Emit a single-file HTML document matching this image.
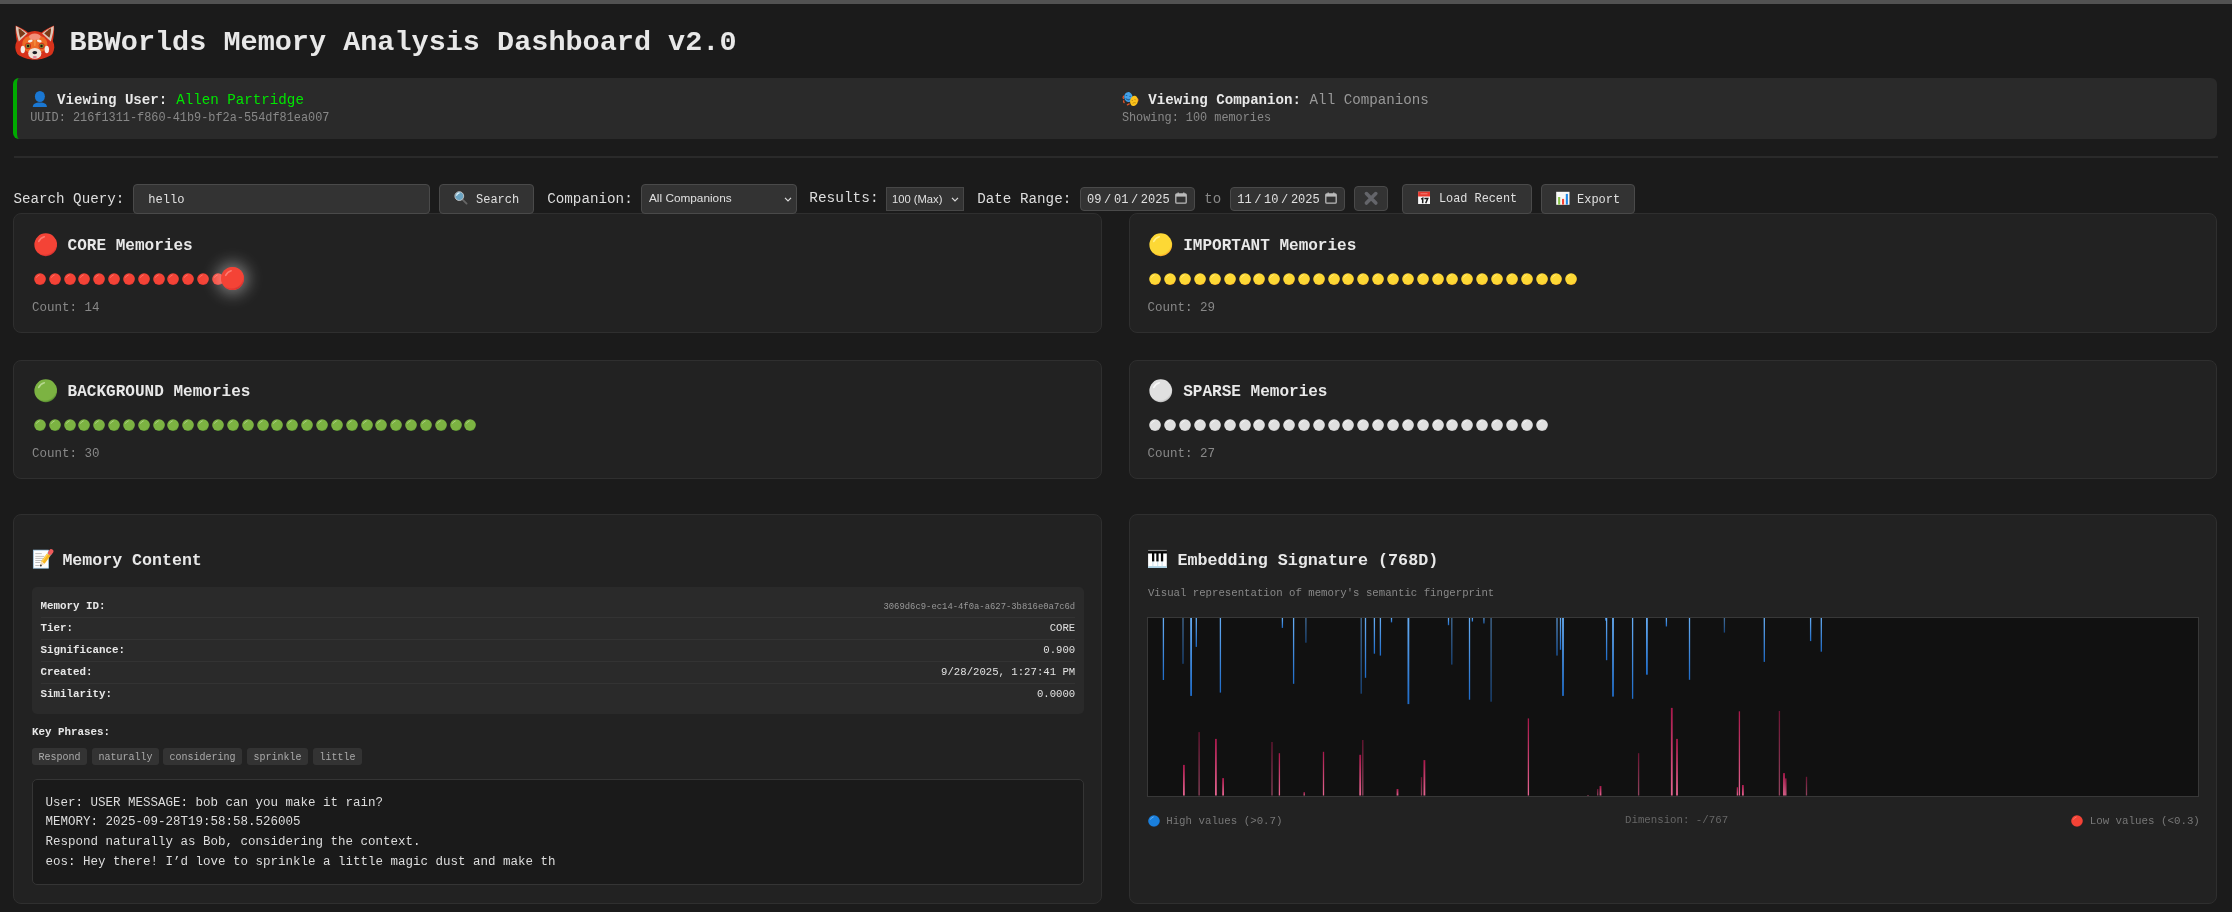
<!DOCTYPE html><html><head><meta charset="utf-8"><title>BBWorlds Memory Analysis Dashboard</title><style>
*{box-sizing:border-box;margin:0;padding:0}
html,body{width:2232px;height:912px;overflow:hidden;background:#1b1b1b;font-family:'Liberation Mono', monospace;color:#e0e0e0;-webkit-font-smoothing:antialiased}
.a{position:absolute}
.t{position:absolute;white-space:pre;line-height:1;font-family:'Liberation Mono', monospace}
.b{font-weight:bold}
.card{position:absolute;background:#222222;border:1px solid #2f2f2f;border-radius:8px}
.inp{position:absolute;background:#333333;border:1px solid #4a4a4a;border-radius:4px}
</style></head><body><div style="position:absolute;left:0;top:0;width:2232px;height:912px;will-change:transform">
<div class="a" style="left:0;top:0;width:2232px;height:4px;background:#525252"></div>
<svg class="a" style="left:12px;top:22px" width="46" height="40" viewBox="12 22 46 40">
<path d="M15.7,25.5 C20,27 25,30 28,32.5 Q34.8,29.5 41.6,32.5 C44.6,30 49.6,27 54,25.5 C54.5,30 53.8,36 52.8,41 C55,45 54.8,50 52.3,54 C47.5,58 40.5,59.6 34.8,59.8 C29,59.6 22,58 17.3,54 C14.8,50 14.6,45 16.8,41 C15.8,36 15.2,30 15.7,25.5 Z" fill="#d7321b"/>
<path d="M15.9,26 C20,28 24.5,30.8 27.5,33.5 L18.8,41.5 C17.3,36 15.6,30 15.9,26 Z" fill="#dcc6b8"/>
<path d="M18.6,28.2 C21,29.5 23.5,31.5 25.3,33.6 L20.2,37.8 C19.1,34.5 18.5,31 18.6,28.2 Z" fill="#7b3b18"/>
<path d="M53.7,26 C49.6,28 45.1,30.8 42.1,33.5 L50.8,41.5 C52.3,36 54,30 53.7,26 Z" fill="#dcc6b8"/>
<path d="M51,28.2 C48.6,29.5 46.1,31.5 44.3,33.6 L49.4,37.8 C50.5,34.5 51.1,31 51,28.2 Z" fill="#7b3b18"/>
<ellipse cx="34.8" cy="44" rx="12.5" ry="9.5" fill="#ec6a26"/>
<ellipse cx="34.8" cy="36.8" rx="5.8" ry="3.2" fill="#f2907a"/>
<path d="M33.6,40 L36,40 L35.5,46 L34.1,46 Z" fill="#f28a3a"/>
<ellipse cx="30.3" cy="41" rx="2.4" ry="1.3" fill="#f6efea" transform="rotate(-15 30.3 41)"/>
<ellipse cx="39.3" cy="41" rx="2.4" ry="1.3" fill="#f6efea" transform="rotate(15 39.3 41)"/>
<circle cx="28" cy="46" r="3" fill="#c8241a"/><circle cx="41.6" cy="46" r="3" fill="#c8241a"/>
<circle cx="28" cy="46" r="2.3" fill="#8d8a2c"/><circle cx="41.6" cy="46" r="2.3" fill="#8d8a2c"/>
<circle cx="28.1" cy="46" r="1.2" fill="#161616"/><circle cx="41.5" cy="46" r="1.2" fill="#161616"/>
<ellipse cx="22.8" cy="49.5" rx="2.2" ry="3.8" fill="#f4ece7"/><ellipse cx="46.8" cy="49.5" rx="2.2" ry="3.8" fill="#f4ece7"/>
<ellipse cx="34.8" cy="53.4" rx="6.6" ry="5.4" fill="#ede1d7"/>
<ellipse cx="34.8" cy="52.6" rx="2.4" ry="1.7" fill="#1c1c24"/>
<ellipse cx="34.8" cy="57" rx="2.1" ry="1.1" fill="#e07b93"/>
</svg>
<div class="t" style="left:69.50px;top:28.67px;font-size:28.5px;color:#e8e8e8;font-weight:bold;">BBWorlds Memory Analysis Dashboard v2.0</div>
<div class="a" style="left:13.3px;top:78px;width:2204px;height:60.5px;background:#2a2a2a;border-left:4px solid #00aa00;border-radius:6px"></div>
<svg class="a" style="left:32px;top:90px" width="16" height="18" viewBox="32 90 16 18">
<ellipse cx="39.9" cy="96.5" rx="5" ry="5.6" fill="#1a77d2"/><path d="M32.8,107.1 C32.8,104 35,102.4 39.9,102.4 C44.8,102.4 46.9,104 46.9,107.1 Z" fill="#1a77d2"/></svg>
<div class="t" style="left:57.00px;top:93.16px;font-size:14.15px;color:#e8e8e8;font-weight:bold;">Viewing User: </div>
<div class="t" style="left:176.20px;top:93.12px;font-size:14.2px;color:#00e600;">Allen Partridge</div>
<div class="t" style="left:30.20px;top:113.20px;font-size:11.88px;color:#888888;">UUID: 216f1311-f860-41b9-bf2a-554df81ea007</div>
<svg class="a" style="left:1120px;top:90px" width="20" height="18" viewBox="1120 90 20 18">
<path d="M1123.6,96.3 q-0.9,1 -0.2,2.2 M1123.8,100.8 q-0.6,1 0.3,1.8 M1127.4,104.8 q1,-0.4 1.8,-0.9 M1137.6,99 q0.7,0.9 0.2,1.9" stroke="#e0542a" stroke-width="1.3" fill="none" stroke-linecap="round"/>
<ellipse cx="1128.4" cy="97.1" rx="4.2" ry="5" fill="#42a0e8" transform="rotate(-8 1128.4 97.1)"/>
<ellipse cx="1126.5" cy="95.6" rx="0.9" ry="0.5" fill="#1f5f95"/><ellipse cx="1130.1" cy="96.2" rx="0.9" ry="0.5" fill="#1f5f95"/>
<path d="M1125.6,98.6 Q1128,101.4 1130.6,99.2 Q1128,100 1125.6,98.6 Z" fill="#1f5f95" stroke="#1f5f95" stroke-width="0.6"/>
<ellipse cx="1134" cy="100.9" rx="3.9" ry="5.2" fill="#fbc21b" transform="rotate(12 1134 100.9)"/>
<path d="M1131.6,100.6 l1.4,-0.3 M1134.4,99.4 l1.3,0.4 M1132.6,103.4 Q1134.2,102 1135.8,102.9" stroke="#b9860e" stroke-width="0.8" fill="none"/>
</svg>
<div class="t" style="left:1148.30px;top:93.16px;font-size:14.15px;color:#e8e8e8;font-weight:bold;">Viewing Companion: </div>
<div class="t" style="left:1309.61px;top:93.12px;font-size:14.2px;color:#999999;">All Companions</div>
<div class="t" style="left:1121.90px;top:113.02px;font-size:11.85px;color:#888888;">Showing: 100 memories</div>
<div class="a" style="left:13.5px;top:156px;width:2204px;height:2px;background:#2a2a2a"></div>
<div class="card" style="left:13.3px;top:213.3px;width:1088.45px;height:119.3px"></div>
<div style="position:absolute;left:33.6px;top:233.10000000000002px;width:23.5px;height:23.5px"><svg width="23.5" height="23.5" viewBox="0 0 32 32" style="display:block"><defs><radialGradient id="gf4433623" cx="45%" cy="40%" r="60%"><stop offset="0" stop-color="#f44336"/><stop offset="0.85" stop-color="#f44336"/><stop offset="1" stop-color="#d32f2f"/></radialGradient></defs><circle cx="16" cy="16" r="15.5" fill="url(#gf4433623)"/><path d="M6.5 11.5 Q9 6.5 14 5.2" stroke="#ff8a80" stroke-width="2.2" fill="none" stroke-linecap="round" opacity="0.8"/></svg></div>
<div class="t" style="left:67.60px;top:237.50px;font-size:16.05px;color:#e8e8e8;font-weight:bold;">CORE Memories</div>
<div style="position:absolute;left:33.8px;top:272.8px;width:12.1px;height:12.1px"><svg width="12.1" height="12.1" viewBox="0 0 32 32" style="display:block"><defs><radialGradient id="gf4433612" cx="45%" cy="40%" r="60%"><stop offset="0" stop-color="#f44336"/><stop offset="0.85" stop-color="#f44336"/><stop offset="1" stop-color="#d32f2f"/></radialGradient></defs><circle cx="16" cy="16" r="15.5" fill="url(#gf4433612)"/><path d="M6.5 11.5 Q9 6.5 14 5.2" stroke="#ff8a80" stroke-width="2.2" fill="none" stroke-linecap="round" opacity="0.8"/></svg></div>
<div style="position:absolute;left:48.65px;top:272.8px;width:12.1px;height:12.1px"><svg width="12.1" height="12.1" viewBox="0 0 32 32" style="display:block"><defs><radialGradient id="gf4433612" cx="45%" cy="40%" r="60%"><stop offset="0" stop-color="#f44336"/><stop offset="0.85" stop-color="#f44336"/><stop offset="1" stop-color="#d32f2f"/></radialGradient></defs><circle cx="16" cy="16" r="15.5" fill="url(#gf4433612)"/><path d="M6.5 11.5 Q9 6.5 14 5.2" stroke="#ff8a80" stroke-width="2.2" fill="none" stroke-linecap="round" opacity="0.8"/></svg></div>
<div style="position:absolute;left:63.5px;top:272.8px;width:12.1px;height:12.1px"><svg width="12.1" height="12.1" viewBox="0 0 32 32" style="display:block"><defs><radialGradient id="gf4433612" cx="45%" cy="40%" r="60%"><stop offset="0" stop-color="#f44336"/><stop offset="0.85" stop-color="#f44336"/><stop offset="1" stop-color="#d32f2f"/></radialGradient></defs><circle cx="16" cy="16" r="15.5" fill="url(#gf4433612)"/><path d="M6.5 11.5 Q9 6.5 14 5.2" stroke="#ff8a80" stroke-width="2.2" fill="none" stroke-linecap="round" opacity="0.8"/></svg></div>
<div style="position:absolute;left:78.35px;top:272.8px;width:12.1px;height:12.1px"><svg width="12.1" height="12.1" viewBox="0 0 32 32" style="display:block"><defs><radialGradient id="gf4433612" cx="45%" cy="40%" r="60%"><stop offset="0" stop-color="#f44336"/><stop offset="0.85" stop-color="#f44336"/><stop offset="1" stop-color="#d32f2f"/></radialGradient></defs><circle cx="16" cy="16" r="15.5" fill="url(#gf4433612)"/><path d="M6.5 11.5 Q9 6.5 14 5.2" stroke="#ff8a80" stroke-width="2.2" fill="none" stroke-linecap="round" opacity="0.8"/></svg></div>
<div style="position:absolute;left:93.19999999999999px;top:272.8px;width:12.1px;height:12.1px"><svg width="12.1" height="12.1" viewBox="0 0 32 32" style="display:block"><defs><radialGradient id="gf4433612" cx="45%" cy="40%" r="60%"><stop offset="0" stop-color="#f44336"/><stop offset="0.85" stop-color="#f44336"/><stop offset="1" stop-color="#d32f2f"/></radialGradient></defs><circle cx="16" cy="16" r="15.5" fill="url(#gf4433612)"/><path d="M6.5 11.5 Q9 6.5 14 5.2" stroke="#ff8a80" stroke-width="2.2" fill="none" stroke-linecap="round" opacity="0.8"/></svg></div>
<div style="position:absolute;left:108.05px;top:272.8px;width:12.1px;height:12.1px"><svg width="12.1" height="12.1" viewBox="0 0 32 32" style="display:block"><defs><radialGradient id="gf4433612" cx="45%" cy="40%" r="60%"><stop offset="0" stop-color="#f44336"/><stop offset="0.85" stop-color="#f44336"/><stop offset="1" stop-color="#d32f2f"/></radialGradient></defs><circle cx="16" cy="16" r="15.5" fill="url(#gf4433612)"/><path d="M6.5 11.5 Q9 6.5 14 5.2" stroke="#ff8a80" stroke-width="2.2" fill="none" stroke-linecap="round" opacity="0.8"/></svg></div>
<div style="position:absolute;left:122.89999999999999px;top:272.8px;width:12.1px;height:12.1px"><svg width="12.1" height="12.1" viewBox="0 0 32 32" style="display:block"><defs><radialGradient id="gf4433612" cx="45%" cy="40%" r="60%"><stop offset="0" stop-color="#f44336"/><stop offset="0.85" stop-color="#f44336"/><stop offset="1" stop-color="#d32f2f"/></radialGradient></defs><circle cx="16" cy="16" r="15.5" fill="url(#gf4433612)"/><path d="M6.5 11.5 Q9 6.5 14 5.2" stroke="#ff8a80" stroke-width="2.2" fill="none" stroke-linecap="round" opacity="0.8"/></svg></div>
<div style="position:absolute;left:137.75px;top:272.8px;width:12.1px;height:12.1px"><svg width="12.1" height="12.1" viewBox="0 0 32 32" style="display:block"><defs><radialGradient id="gf4433612" cx="45%" cy="40%" r="60%"><stop offset="0" stop-color="#f44336"/><stop offset="0.85" stop-color="#f44336"/><stop offset="1" stop-color="#d32f2f"/></radialGradient></defs><circle cx="16" cy="16" r="15.5" fill="url(#gf4433612)"/><path d="M6.5 11.5 Q9 6.5 14 5.2" stroke="#ff8a80" stroke-width="2.2" fill="none" stroke-linecap="round" opacity="0.8"/></svg></div>
<div style="position:absolute;left:152.6px;top:272.8px;width:12.1px;height:12.1px"><svg width="12.1" height="12.1" viewBox="0 0 32 32" style="display:block"><defs><radialGradient id="gf4433612" cx="45%" cy="40%" r="60%"><stop offset="0" stop-color="#f44336"/><stop offset="0.85" stop-color="#f44336"/><stop offset="1" stop-color="#d32f2f"/></radialGradient></defs><circle cx="16" cy="16" r="15.5" fill="url(#gf4433612)"/><path d="M6.5 11.5 Q9 6.5 14 5.2" stroke="#ff8a80" stroke-width="2.2" fill="none" stroke-linecap="round" opacity="0.8"/></svg></div>
<div style="position:absolute;left:167.45px;top:272.8px;width:12.1px;height:12.1px"><svg width="12.1" height="12.1" viewBox="0 0 32 32" style="display:block"><defs><radialGradient id="gf4433612" cx="45%" cy="40%" r="60%"><stop offset="0" stop-color="#f44336"/><stop offset="0.85" stop-color="#f44336"/><stop offset="1" stop-color="#d32f2f"/></radialGradient></defs><circle cx="16" cy="16" r="15.5" fill="url(#gf4433612)"/><path d="M6.5 11.5 Q9 6.5 14 5.2" stroke="#ff8a80" stroke-width="2.2" fill="none" stroke-linecap="round" opacity="0.8"/></svg></div>
<div style="position:absolute;left:182.3px;top:272.8px;width:12.1px;height:12.1px"><svg width="12.1" height="12.1" viewBox="0 0 32 32" style="display:block"><defs><radialGradient id="gf4433612" cx="45%" cy="40%" r="60%"><stop offset="0" stop-color="#f44336"/><stop offset="0.85" stop-color="#f44336"/><stop offset="1" stop-color="#d32f2f"/></radialGradient></defs><circle cx="16" cy="16" r="15.5" fill="url(#gf4433612)"/><path d="M6.5 11.5 Q9 6.5 14 5.2" stroke="#ff8a80" stroke-width="2.2" fill="none" stroke-linecap="round" opacity="0.8"/></svg></div>
<div style="position:absolute;left:197.14999999999998px;top:272.8px;width:12.1px;height:12.1px"><svg width="12.1" height="12.1" viewBox="0 0 32 32" style="display:block"><defs><radialGradient id="gf4433612" cx="45%" cy="40%" r="60%"><stop offset="0" stop-color="#f44336"/><stop offset="0.85" stop-color="#f44336"/><stop offset="1" stop-color="#d32f2f"/></radialGradient></defs><circle cx="16" cy="16" r="15.5" fill="url(#gf4433612)"/><path d="M6.5 11.5 Q9 6.5 14 5.2" stroke="#ff8a80" stroke-width="2.2" fill="none" stroke-linecap="round" opacity="0.8"/></svg></div>
<div style="position:absolute;left:212.0px;top:272.8px;width:12.1px;height:12.1px"><svg width="12.1" height="12.1" viewBox="0 0 32 32" style="display:block"><defs><radialGradient id="gf4433612" cx="45%" cy="40%" r="60%"><stop offset="0" stop-color="#f44336"/><stop offset="0.85" stop-color="#f44336"/><stop offset="1" stop-color="#d32f2f"/></radialGradient></defs><circle cx="16" cy="16" r="15.5" fill="url(#gf4433612)"/><path d="M6.5 11.5 Q9 6.5 14 5.2" stroke="#ff8a80" stroke-width="2.2" fill="none" stroke-linecap="round" opacity="0.8"/></svg></div>
<div class="a" style="left:221.29999999999998px;top:267.25px;width:23.2px;height:23.2px;border-radius:50%;background:#f44336;box-shadow:0 0 16px 4px rgba(255,255,255,0.42)"></div>
<div style="position:absolute;left:221.29999999999998px;top:267.25px;width:23.2px;height:23.2px"><svg width="23.2" height="23.2" viewBox="0 0 32 32" style="display:block"><defs><radialGradient id="gf4433623" cx="45%" cy="40%" r="60%"><stop offset="0" stop-color="#f44336"/><stop offset="0.85" stop-color="#f44336"/><stop offset="1" stop-color="#d32f2f"/></radialGradient></defs><circle cx="16" cy="16" r="15.5" fill="url(#gf4433623)"/><path d="M6.5 11.5 Q9 6.5 14 5.2" stroke="#ff8a80" stroke-width="2.2" fill="none" stroke-linecap="round" opacity="0.8"/></svg></div>
<div class="t" style="left:31.90px;top:301.52px;font-size:12.5px;color:#888888;">Count: 14</div>
<div class="card" style="left:1128.9px;top:213.3px;width:1088.1px;height:119.3px"></div>
<div style="position:absolute;left:1149.2px;top:233.10000000000002px;width:23.5px;height:23.5px"><svg width="23.5" height="23.5" viewBox="0 0 32 32" style="display:block"><defs><radialGradient id="gfdd83523" cx="45%" cy="40%" r="60%"><stop offset="0" stop-color="#fdd835"/><stop offset="0.85" stop-color="#fdd835"/><stop offset="1" stop-color="#f9a825"/></radialGradient></defs><circle cx="16" cy="16" r="15.5" fill="url(#gfdd83523)"/><path d="M6.5 11.5 Q9 6.5 14 5.2" stroke="#fff59d" stroke-width="2.2" fill="none" stroke-linecap="round" opacity="0.8"/></svg></div>
<div class="t" style="left:1183.20px;top:237.50px;font-size:16.05px;color:#e8e8e8;font-weight:bold;">IMPORTANT Memories</div>
<div style="position:absolute;left:1149.4px;top:272.8px;width:12.1px;height:12.1px"><svg width="12.1" height="12.1" viewBox="0 0 32 32" style="display:block"><defs><radialGradient id="gfdd83512" cx="45%" cy="40%" r="60%"><stop offset="0" stop-color="#fdd835"/><stop offset="0.85" stop-color="#fdd835"/><stop offset="1" stop-color="#f9a825"/></radialGradient></defs><circle cx="16" cy="16" r="15.5" fill="url(#gfdd83512)"/><path d="M6.5 11.5 Q9 6.5 14 5.2" stroke="#fff59d" stroke-width="2.2" fill="none" stroke-linecap="round" opacity="0.8"/></svg></div>
<div style="position:absolute;left:1164.25px;top:272.8px;width:12.1px;height:12.1px"><svg width="12.1" height="12.1" viewBox="0 0 32 32" style="display:block"><defs><radialGradient id="gfdd83512" cx="45%" cy="40%" r="60%"><stop offset="0" stop-color="#fdd835"/><stop offset="0.85" stop-color="#fdd835"/><stop offset="1" stop-color="#f9a825"/></radialGradient></defs><circle cx="16" cy="16" r="15.5" fill="url(#gfdd83512)"/><path d="M6.5 11.5 Q9 6.5 14 5.2" stroke="#fff59d" stroke-width="2.2" fill="none" stroke-linecap="round" opacity="0.8"/></svg></div>
<div style="position:absolute;left:1179.1000000000001px;top:272.8px;width:12.1px;height:12.1px"><svg width="12.1" height="12.1" viewBox="0 0 32 32" style="display:block"><defs><radialGradient id="gfdd83512" cx="45%" cy="40%" r="60%"><stop offset="0" stop-color="#fdd835"/><stop offset="0.85" stop-color="#fdd835"/><stop offset="1" stop-color="#f9a825"/></radialGradient></defs><circle cx="16" cy="16" r="15.5" fill="url(#gfdd83512)"/><path d="M6.5 11.5 Q9 6.5 14 5.2" stroke="#fff59d" stroke-width="2.2" fill="none" stroke-linecap="round" opacity="0.8"/></svg></div>
<div style="position:absolute;left:1193.95px;top:272.8px;width:12.1px;height:12.1px"><svg width="12.1" height="12.1" viewBox="0 0 32 32" style="display:block"><defs><radialGradient id="gfdd83512" cx="45%" cy="40%" r="60%"><stop offset="0" stop-color="#fdd835"/><stop offset="0.85" stop-color="#fdd835"/><stop offset="1" stop-color="#f9a825"/></radialGradient></defs><circle cx="16" cy="16" r="15.5" fill="url(#gfdd83512)"/><path d="M6.5 11.5 Q9 6.5 14 5.2" stroke="#fff59d" stroke-width="2.2" fill="none" stroke-linecap="round" opacity="0.8"/></svg></div>
<div style="position:absolute;left:1208.8000000000002px;top:272.8px;width:12.1px;height:12.1px"><svg width="12.1" height="12.1" viewBox="0 0 32 32" style="display:block"><defs><radialGradient id="gfdd83512" cx="45%" cy="40%" r="60%"><stop offset="0" stop-color="#fdd835"/><stop offset="0.85" stop-color="#fdd835"/><stop offset="1" stop-color="#f9a825"/></radialGradient></defs><circle cx="16" cy="16" r="15.5" fill="url(#gfdd83512)"/><path d="M6.5 11.5 Q9 6.5 14 5.2" stroke="#fff59d" stroke-width="2.2" fill="none" stroke-linecap="round" opacity="0.8"/></svg></div>
<div style="position:absolute;left:1223.65px;top:272.8px;width:12.1px;height:12.1px"><svg width="12.1" height="12.1" viewBox="0 0 32 32" style="display:block"><defs><radialGradient id="gfdd83512" cx="45%" cy="40%" r="60%"><stop offset="0" stop-color="#fdd835"/><stop offset="0.85" stop-color="#fdd835"/><stop offset="1" stop-color="#f9a825"/></radialGradient></defs><circle cx="16" cy="16" r="15.5" fill="url(#gfdd83512)"/><path d="M6.5 11.5 Q9 6.5 14 5.2" stroke="#fff59d" stroke-width="2.2" fill="none" stroke-linecap="round" opacity="0.8"/></svg></div>
<div style="position:absolute;left:1238.5px;top:272.8px;width:12.1px;height:12.1px"><svg width="12.1" height="12.1" viewBox="0 0 32 32" style="display:block"><defs><radialGradient id="gfdd83512" cx="45%" cy="40%" r="60%"><stop offset="0" stop-color="#fdd835"/><stop offset="0.85" stop-color="#fdd835"/><stop offset="1" stop-color="#f9a825"/></radialGradient></defs><circle cx="16" cy="16" r="15.5" fill="url(#gfdd83512)"/><path d="M6.5 11.5 Q9 6.5 14 5.2" stroke="#fff59d" stroke-width="2.2" fill="none" stroke-linecap="round" opacity="0.8"/></svg></div>
<div style="position:absolute;left:1253.3500000000001px;top:272.8px;width:12.1px;height:12.1px"><svg width="12.1" height="12.1" viewBox="0 0 32 32" style="display:block"><defs><radialGradient id="gfdd83512" cx="45%" cy="40%" r="60%"><stop offset="0" stop-color="#fdd835"/><stop offset="0.85" stop-color="#fdd835"/><stop offset="1" stop-color="#f9a825"/></radialGradient></defs><circle cx="16" cy="16" r="15.5" fill="url(#gfdd83512)"/><path d="M6.5 11.5 Q9 6.5 14 5.2" stroke="#fff59d" stroke-width="2.2" fill="none" stroke-linecap="round" opacity="0.8"/></svg></div>
<div style="position:absolute;left:1268.2px;top:272.8px;width:12.1px;height:12.1px"><svg width="12.1" height="12.1" viewBox="0 0 32 32" style="display:block"><defs><radialGradient id="gfdd83512" cx="45%" cy="40%" r="60%"><stop offset="0" stop-color="#fdd835"/><stop offset="0.85" stop-color="#fdd835"/><stop offset="1" stop-color="#f9a825"/></radialGradient></defs><circle cx="16" cy="16" r="15.5" fill="url(#gfdd83512)"/><path d="M6.5 11.5 Q9 6.5 14 5.2" stroke="#fff59d" stroke-width="2.2" fill="none" stroke-linecap="round" opacity="0.8"/></svg></div>
<div style="position:absolute;left:1283.0500000000002px;top:272.8px;width:12.1px;height:12.1px"><svg width="12.1" height="12.1" viewBox="0 0 32 32" style="display:block"><defs><radialGradient id="gfdd83512" cx="45%" cy="40%" r="60%"><stop offset="0" stop-color="#fdd835"/><stop offset="0.85" stop-color="#fdd835"/><stop offset="1" stop-color="#f9a825"/></radialGradient></defs><circle cx="16" cy="16" r="15.5" fill="url(#gfdd83512)"/><path d="M6.5 11.5 Q9 6.5 14 5.2" stroke="#fff59d" stroke-width="2.2" fill="none" stroke-linecap="round" opacity="0.8"/></svg></div>
<div style="position:absolute;left:1297.9px;top:272.8px;width:12.1px;height:12.1px"><svg width="12.1" height="12.1" viewBox="0 0 32 32" style="display:block"><defs><radialGradient id="gfdd83512" cx="45%" cy="40%" r="60%"><stop offset="0" stop-color="#fdd835"/><stop offset="0.85" stop-color="#fdd835"/><stop offset="1" stop-color="#f9a825"/></radialGradient></defs><circle cx="16" cy="16" r="15.5" fill="url(#gfdd83512)"/><path d="M6.5 11.5 Q9 6.5 14 5.2" stroke="#fff59d" stroke-width="2.2" fill="none" stroke-linecap="round" opacity="0.8"/></svg></div>
<div style="position:absolute;left:1312.75px;top:272.8px;width:12.1px;height:12.1px"><svg width="12.1" height="12.1" viewBox="0 0 32 32" style="display:block"><defs><radialGradient id="gfdd83512" cx="45%" cy="40%" r="60%"><stop offset="0" stop-color="#fdd835"/><stop offset="0.85" stop-color="#fdd835"/><stop offset="1" stop-color="#f9a825"/></radialGradient></defs><circle cx="16" cy="16" r="15.5" fill="url(#gfdd83512)"/><path d="M6.5 11.5 Q9 6.5 14 5.2" stroke="#fff59d" stroke-width="2.2" fill="none" stroke-linecap="round" opacity="0.8"/></svg></div>
<div style="position:absolute;left:1327.6000000000001px;top:272.8px;width:12.1px;height:12.1px"><svg width="12.1" height="12.1" viewBox="0 0 32 32" style="display:block"><defs><radialGradient id="gfdd83512" cx="45%" cy="40%" r="60%"><stop offset="0" stop-color="#fdd835"/><stop offset="0.85" stop-color="#fdd835"/><stop offset="1" stop-color="#f9a825"/></radialGradient></defs><circle cx="16" cy="16" r="15.5" fill="url(#gfdd83512)"/><path d="M6.5 11.5 Q9 6.5 14 5.2" stroke="#fff59d" stroke-width="2.2" fill="none" stroke-linecap="round" opacity="0.8"/></svg></div>
<div style="position:absolute;left:1342.45px;top:272.8px;width:12.1px;height:12.1px"><svg width="12.1" height="12.1" viewBox="0 0 32 32" style="display:block"><defs><radialGradient id="gfdd83512" cx="45%" cy="40%" r="60%"><stop offset="0" stop-color="#fdd835"/><stop offset="0.85" stop-color="#fdd835"/><stop offset="1" stop-color="#f9a825"/></radialGradient></defs><circle cx="16" cy="16" r="15.5" fill="url(#gfdd83512)"/><path d="M6.5 11.5 Q9 6.5 14 5.2" stroke="#fff59d" stroke-width="2.2" fill="none" stroke-linecap="round" opacity="0.8"/></svg></div>
<div style="position:absolute;left:1357.3000000000002px;top:272.8px;width:12.1px;height:12.1px"><svg width="12.1" height="12.1" viewBox="0 0 32 32" style="display:block"><defs><radialGradient id="gfdd83512" cx="45%" cy="40%" r="60%"><stop offset="0" stop-color="#fdd835"/><stop offset="0.85" stop-color="#fdd835"/><stop offset="1" stop-color="#f9a825"/></radialGradient></defs><circle cx="16" cy="16" r="15.5" fill="url(#gfdd83512)"/><path d="M6.5 11.5 Q9 6.5 14 5.2" stroke="#fff59d" stroke-width="2.2" fill="none" stroke-linecap="round" opacity="0.8"/></svg></div>
<div style="position:absolute;left:1372.15px;top:272.8px;width:12.1px;height:12.1px"><svg width="12.1" height="12.1" viewBox="0 0 32 32" style="display:block"><defs><radialGradient id="gfdd83512" cx="45%" cy="40%" r="60%"><stop offset="0" stop-color="#fdd835"/><stop offset="0.85" stop-color="#fdd835"/><stop offset="1" stop-color="#f9a825"/></radialGradient></defs><circle cx="16" cy="16" r="15.5" fill="url(#gfdd83512)"/><path d="M6.5 11.5 Q9 6.5 14 5.2" stroke="#fff59d" stroke-width="2.2" fill="none" stroke-linecap="round" opacity="0.8"/></svg></div>
<div style="position:absolute;left:1387.0px;top:272.8px;width:12.1px;height:12.1px"><svg width="12.1" height="12.1" viewBox="0 0 32 32" style="display:block"><defs><radialGradient id="gfdd83512" cx="45%" cy="40%" r="60%"><stop offset="0" stop-color="#fdd835"/><stop offset="0.85" stop-color="#fdd835"/><stop offset="1" stop-color="#f9a825"/></radialGradient></defs><circle cx="16" cy="16" r="15.5" fill="url(#gfdd83512)"/><path d="M6.5 11.5 Q9 6.5 14 5.2" stroke="#fff59d" stroke-width="2.2" fill="none" stroke-linecap="round" opacity="0.8"/></svg></div>
<div style="position:absolute;left:1401.8500000000001px;top:272.8px;width:12.1px;height:12.1px"><svg width="12.1" height="12.1" viewBox="0 0 32 32" style="display:block"><defs><radialGradient id="gfdd83512" cx="45%" cy="40%" r="60%"><stop offset="0" stop-color="#fdd835"/><stop offset="0.85" stop-color="#fdd835"/><stop offset="1" stop-color="#f9a825"/></radialGradient></defs><circle cx="16" cy="16" r="15.5" fill="url(#gfdd83512)"/><path d="M6.5 11.5 Q9 6.5 14 5.2" stroke="#fff59d" stroke-width="2.2" fill="none" stroke-linecap="round" opacity="0.8"/></svg></div>
<div style="position:absolute;left:1416.7px;top:272.8px;width:12.1px;height:12.1px"><svg width="12.1" height="12.1" viewBox="0 0 32 32" style="display:block"><defs><radialGradient id="gfdd83512" cx="45%" cy="40%" r="60%"><stop offset="0" stop-color="#fdd835"/><stop offset="0.85" stop-color="#fdd835"/><stop offset="1" stop-color="#f9a825"/></radialGradient></defs><circle cx="16" cy="16" r="15.5" fill="url(#gfdd83512)"/><path d="M6.5 11.5 Q9 6.5 14 5.2" stroke="#fff59d" stroke-width="2.2" fill="none" stroke-linecap="round" opacity="0.8"/></svg></div>
<div style="position:absolute;left:1431.5500000000002px;top:272.8px;width:12.1px;height:12.1px"><svg width="12.1" height="12.1" viewBox="0 0 32 32" style="display:block"><defs><radialGradient id="gfdd83512" cx="45%" cy="40%" r="60%"><stop offset="0" stop-color="#fdd835"/><stop offset="0.85" stop-color="#fdd835"/><stop offset="1" stop-color="#f9a825"/></radialGradient></defs><circle cx="16" cy="16" r="15.5" fill="url(#gfdd83512)"/><path d="M6.5 11.5 Q9 6.5 14 5.2" stroke="#fff59d" stroke-width="2.2" fill="none" stroke-linecap="round" opacity="0.8"/></svg></div>
<div style="position:absolute;left:1446.4px;top:272.8px;width:12.1px;height:12.1px"><svg width="12.1" height="12.1" viewBox="0 0 32 32" style="display:block"><defs><radialGradient id="gfdd83512" cx="45%" cy="40%" r="60%"><stop offset="0" stop-color="#fdd835"/><stop offset="0.85" stop-color="#fdd835"/><stop offset="1" stop-color="#f9a825"/></radialGradient></defs><circle cx="16" cy="16" r="15.5" fill="url(#gfdd83512)"/><path d="M6.5 11.5 Q9 6.5 14 5.2" stroke="#fff59d" stroke-width="2.2" fill="none" stroke-linecap="round" opacity="0.8"/></svg></div>
<div style="position:absolute;left:1461.25px;top:272.8px;width:12.1px;height:12.1px"><svg width="12.1" height="12.1" viewBox="0 0 32 32" style="display:block"><defs><radialGradient id="gfdd83512" cx="45%" cy="40%" r="60%"><stop offset="0" stop-color="#fdd835"/><stop offset="0.85" stop-color="#fdd835"/><stop offset="1" stop-color="#f9a825"/></radialGradient></defs><circle cx="16" cy="16" r="15.5" fill="url(#gfdd83512)"/><path d="M6.5 11.5 Q9 6.5 14 5.2" stroke="#fff59d" stroke-width="2.2" fill="none" stroke-linecap="round" opacity="0.8"/></svg></div>
<div style="position:absolute;left:1476.1000000000001px;top:272.8px;width:12.1px;height:12.1px"><svg width="12.1" height="12.1" viewBox="0 0 32 32" style="display:block"><defs><radialGradient id="gfdd83512" cx="45%" cy="40%" r="60%"><stop offset="0" stop-color="#fdd835"/><stop offset="0.85" stop-color="#fdd835"/><stop offset="1" stop-color="#f9a825"/></radialGradient></defs><circle cx="16" cy="16" r="15.5" fill="url(#gfdd83512)"/><path d="M6.5 11.5 Q9 6.5 14 5.2" stroke="#fff59d" stroke-width="2.2" fill="none" stroke-linecap="round" opacity="0.8"/></svg></div>
<div style="position:absolute;left:1490.95px;top:272.8px;width:12.1px;height:12.1px"><svg width="12.1" height="12.1" viewBox="0 0 32 32" style="display:block"><defs><radialGradient id="gfdd83512" cx="45%" cy="40%" r="60%"><stop offset="0" stop-color="#fdd835"/><stop offset="0.85" stop-color="#fdd835"/><stop offset="1" stop-color="#f9a825"/></radialGradient></defs><circle cx="16" cy="16" r="15.5" fill="url(#gfdd83512)"/><path d="M6.5 11.5 Q9 6.5 14 5.2" stroke="#fff59d" stroke-width="2.2" fill="none" stroke-linecap="round" opacity="0.8"/></svg></div>
<div style="position:absolute;left:1505.8000000000002px;top:272.8px;width:12.1px;height:12.1px"><svg width="12.1" height="12.1" viewBox="0 0 32 32" style="display:block"><defs><radialGradient id="gfdd83512" cx="45%" cy="40%" r="60%"><stop offset="0" stop-color="#fdd835"/><stop offset="0.85" stop-color="#fdd835"/><stop offset="1" stop-color="#f9a825"/></radialGradient></defs><circle cx="16" cy="16" r="15.5" fill="url(#gfdd83512)"/><path d="M6.5 11.5 Q9 6.5 14 5.2" stroke="#fff59d" stroke-width="2.2" fill="none" stroke-linecap="round" opacity="0.8"/></svg></div>
<div style="position:absolute;left:1520.65px;top:272.8px;width:12.1px;height:12.1px"><svg width="12.1" height="12.1" viewBox="0 0 32 32" style="display:block"><defs><radialGradient id="gfdd83512" cx="45%" cy="40%" r="60%"><stop offset="0" stop-color="#fdd835"/><stop offset="0.85" stop-color="#fdd835"/><stop offset="1" stop-color="#f9a825"/></radialGradient></defs><circle cx="16" cy="16" r="15.5" fill="url(#gfdd83512)"/><path d="M6.5 11.5 Q9 6.5 14 5.2" stroke="#fff59d" stroke-width="2.2" fill="none" stroke-linecap="round" opacity="0.8"/></svg></div>
<div style="position:absolute;left:1535.5px;top:272.8px;width:12.1px;height:12.1px"><svg width="12.1" height="12.1" viewBox="0 0 32 32" style="display:block"><defs><radialGradient id="gfdd83512" cx="45%" cy="40%" r="60%"><stop offset="0" stop-color="#fdd835"/><stop offset="0.85" stop-color="#fdd835"/><stop offset="1" stop-color="#f9a825"/></radialGradient></defs><circle cx="16" cy="16" r="15.5" fill="url(#gfdd83512)"/><path d="M6.5 11.5 Q9 6.5 14 5.2" stroke="#fff59d" stroke-width="2.2" fill="none" stroke-linecap="round" opacity="0.8"/></svg></div>
<div style="position:absolute;left:1550.3500000000001px;top:272.8px;width:12.1px;height:12.1px"><svg width="12.1" height="12.1" viewBox="0 0 32 32" style="display:block"><defs><radialGradient id="gfdd83512" cx="45%" cy="40%" r="60%"><stop offset="0" stop-color="#fdd835"/><stop offset="0.85" stop-color="#fdd835"/><stop offset="1" stop-color="#f9a825"/></radialGradient></defs><circle cx="16" cy="16" r="15.5" fill="url(#gfdd83512)"/><path d="M6.5 11.5 Q9 6.5 14 5.2" stroke="#fff59d" stroke-width="2.2" fill="none" stroke-linecap="round" opacity="0.8"/></svg></div>
<div style="position:absolute;left:1565.2px;top:272.8px;width:12.1px;height:12.1px"><svg width="12.1" height="12.1" viewBox="0 0 32 32" style="display:block"><defs><radialGradient id="gfdd83512" cx="45%" cy="40%" r="60%"><stop offset="0" stop-color="#fdd835"/><stop offset="0.85" stop-color="#fdd835"/><stop offset="1" stop-color="#f9a825"/></radialGradient></defs><circle cx="16" cy="16" r="15.5" fill="url(#gfdd83512)"/><path d="M6.5 11.5 Q9 6.5 14 5.2" stroke="#fff59d" stroke-width="2.2" fill="none" stroke-linecap="round" opacity="0.8"/></svg></div>
<div class="t" style="left:1147.50px;top:301.52px;font-size:12.5px;color:#888888;">Count: 29</div>
<div class="card" style="left:13.3px;top:359.5px;width:1088.45px;height:119.3px"></div>
<div style="position:absolute;left:33.6px;top:379.3px;width:23.5px;height:23.5px"><svg width="23.5" height="23.5" viewBox="0 0 32 32" style="display:block"><defs><radialGradient id="g7cb34223" cx="45%" cy="40%" r="60%"><stop offset="0" stop-color="#7cb342"/><stop offset="0.85" stop-color="#7cb342"/><stop offset="1" stop-color="#558b2f"/></radialGradient></defs><circle cx="16" cy="16" r="15.5" fill="url(#g7cb34223)"/><path d="M6.5 11.5 Q9 6.5 14 5.2" stroke="#c5e1a5" stroke-width="2.2" fill="none" stroke-linecap="round" opacity="0.8"/></svg></div>
<div class="t" style="left:67.60px;top:383.70px;font-size:16.05px;color:#e8e8e8;font-weight:bold;">BACKGROUND Memories</div>
<div style="position:absolute;left:33.8px;top:419.0px;width:12.1px;height:12.1px"><svg width="12.1" height="12.1" viewBox="0 0 32 32" style="display:block"><defs><radialGradient id="g7cb34212" cx="45%" cy="40%" r="60%"><stop offset="0" stop-color="#7cb342"/><stop offset="0.85" stop-color="#7cb342"/><stop offset="1" stop-color="#558b2f"/></radialGradient></defs><circle cx="16" cy="16" r="15.5" fill="url(#g7cb34212)"/><path d="M6.5 11.5 Q9 6.5 14 5.2" stroke="#c5e1a5" stroke-width="2.2" fill="none" stroke-linecap="round" opacity="0.8"/></svg></div>
<div style="position:absolute;left:48.65px;top:419.0px;width:12.1px;height:12.1px"><svg width="12.1" height="12.1" viewBox="0 0 32 32" style="display:block"><defs><radialGradient id="g7cb34212" cx="45%" cy="40%" r="60%"><stop offset="0" stop-color="#7cb342"/><stop offset="0.85" stop-color="#7cb342"/><stop offset="1" stop-color="#558b2f"/></radialGradient></defs><circle cx="16" cy="16" r="15.5" fill="url(#g7cb34212)"/><path d="M6.5 11.5 Q9 6.5 14 5.2" stroke="#c5e1a5" stroke-width="2.2" fill="none" stroke-linecap="round" opacity="0.8"/></svg></div>
<div style="position:absolute;left:63.5px;top:419.0px;width:12.1px;height:12.1px"><svg width="12.1" height="12.1" viewBox="0 0 32 32" style="display:block"><defs><radialGradient id="g7cb34212" cx="45%" cy="40%" r="60%"><stop offset="0" stop-color="#7cb342"/><stop offset="0.85" stop-color="#7cb342"/><stop offset="1" stop-color="#558b2f"/></radialGradient></defs><circle cx="16" cy="16" r="15.5" fill="url(#g7cb34212)"/><path d="M6.5 11.5 Q9 6.5 14 5.2" stroke="#c5e1a5" stroke-width="2.2" fill="none" stroke-linecap="round" opacity="0.8"/></svg></div>
<div style="position:absolute;left:78.35px;top:419.0px;width:12.1px;height:12.1px"><svg width="12.1" height="12.1" viewBox="0 0 32 32" style="display:block"><defs><radialGradient id="g7cb34212" cx="45%" cy="40%" r="60%"><stop offset="0" stop-color="#7cb342"/><stop offset="0.85" stop-color="#7cb342"/><stop offset="1" stop-color="#558b2f"/></radialGradient></defs><circle cx="16" cy="16" r="15.5" fill="url(#g7cb34212)"/><path d="M6.5 11.5 Q9 6.5 14 5.2" stroke="#c5e1a5" stroke-width="2.2" fill="none" stroke-linecap="round" opacity="0.8"/></svg></div>
<div style="position:absolute;left:93.19999999999999px;top:419.0px;width:12.1px;height:12.1px"><svg width="12.1" height="12.1" viewBox="0 0 32 32" style="display:block"><defs><radialGradient id="g7cb34212" cx="45%" cy="40%" r="60%"><stop offset="0" stop-color="#7cb342"/><stop offset="0.85" stop-color="#7cb342"/><stop offset="1" stop-color="#558b2f"/></radialGradient></defs><circle cx="16" cy="16" r="15.5" fill="url(#g7cb34212)"/><path d="M6.5 11.5 Q9 6.5 14 5.2" stroke="#c5e1a5" stroke-width="2.2" fill="none" stroke-linecap="round" opacity="0.8"/></svg></div>
<div style="position:absolute;left:108.05px;top:419.0px;width:12.1px;height:12.1px"><svg width="12.1" height="12.1" viewBox="0 0 32 32" style="display:block"><defs><radialGradient id="g7cb34212" cx="45%" cy="40%" r="60%"><stop offset="0" stop-color="#7cb342"/><stop offset="0.85" stop-color="#7cb342"/><stop offset="1" stop-color="#558b2f"/></radialGradient></defs><circle cx="16" cy="16" r="15.5" fill="url(#g7cb34212)"/><path d="M6.5 11.5 Q9 6.5 14 5.2" stroke="#c5e1a5" stroke-width="2.2" fill="none" stroke-linecap="round" opacity="0.8"/></svg></div>
<div style="position:absolute;left:122.89999999999999px;top:419.0px;width:12.1px;height:12.1px"><svg width="12.1" height="12.1" viewBox="0 0 32 32" style="display:block"><defs><radialGradient id="g7cb34212" cx="45%" cy="40%" r="60%"><stop offset="0" stop-color="#7cb342"/><stop offset="0.85" stop-color="#7cb342"/><stop offset="1" stop-color="#558b2f"/></radialGradient></defs><circle cx="16" cy="16" r="15.5" fill="url(#g7cb34212)"/><path d="M6.5 11.5 Q9 6.5 14 5.2" stroke="#c5e1a5" stroke-width="2.2" fill="none" stroke-linecap="round" opacity="0.8"/></svg></div>
<div style="position:absolute;left:137.75px;top:419.0px;width:12.1px;height:12.1px"><svg width="12.1" height="12.1" viewBox="0 0 32 32" style="display:block"><defs><radialGradient id="g7cb34212" cx="45%" cy="40%" r="60%"><stop offset="0" stop-color="#7cb342"/><stop offset="0.85" stop-color="#7cb342"/><stop offset="1" stop-color="#558b2f"/></radialGradient></defs><circle cx="16" cy="16" r="15.5" fill="url(#g7cb34212)"/><path d="M6.5 11.5 Q9 6.5 14 5.2" stroke="#c5e1a5" stroke-width="2.2" fill="none" stroke-linecap="round" opacity="0.8"/></svg></div>
<div style="position:absolute;left:152.6px;top:419.0px;width:12.1px;height:12.1px"><svg width="12.1" height="12.1" viewBox="0 0 32 32" style="display:block"><defs><radialGradient id="g7cb34212" cx="45%" cy="40%" r="60%"><stop offset="0" stop-color="#7cb342"/><stop offset="0.85" stop-color="#7cb342"/><stop offset="1" stop-color="#558b2f"/></radialGradient></defs><circle cx="16" cy="16" r="15.5" fill="url(#g7cb34212)"/><path d="M6.5 11.5 Q9 6.5 14 5.2" stroke="#c5e1a5" stroke-width="2.2" fill="none" stroke-linecap="round" opacity="0.8"/></svg></div>
<div style="position:absolute;left:167.45px;top:419.0px;width:12.1px;height:12.1px"><svg width="12.1" height="12.1" viewBox="0 0 32 32" style="display:block"><defs><radialGradient id="g7cb34212" cx="45%" cy="40%" r="60%"><stop offset="0" stop-color="#7cb342"/><stop offset="0.85" stop-color="#7cb342"/><stop offset="1" stop-color="#558b2f"/></radialGradient></defs><circle cx="16" cy="16" r="15.5" fill="url(#g7cb34212)"/><path d="M6.5 11.5 Q9 6.5 14 5.2" stroke="#c5e1a5" stroke-width="2.2" fill="none" stroke-linecap="round" opacity="0.8"/></svg></div>
<div style="position:absolute;left:182.3px;top:419.0px;width:12.1px;height:12.1px"><svg width="12.1" height="12.1" viewBox="0 0 32 32" style="display:block"><defs><radialGradient id="g7cb34212" cx="45%" cy="40%" r="60%"><stop offset="0" stop-color="#7cb342"/><stop offset="0.85" stop-color="#7cb342"/><stop offset="1" stop-color="#558b2f"/></radialGradient></defs><circle cx="16" cy="16" r="15.5" fill="url(#g7cb34212)"/><path d="M6.5 11.5 Q9 6.5 14 5.2" stroke="#c5e1a5" stroke-width="2.2" fill="none" stroke-linecap="round" opacity="0.8"/></svg></div>
<div style="position:absolute;left:197.14999999999998px;top:419.0px;width:12.1px;height:12.1px"><svg width="12.1" height="12.1" viewBox="0 0 32 32" style="display:block"><defs><radialGradient id="g7cb34212" cx="45%" cy="40%" r="60%"><stop offset="0" stop-color="#7cb342"/><stop offset="0.85" stop-color="#7cb342"/><stop offset="1" stop-color="#558b2f"/></radialGradient></defs><circle cx="16" cy="16" r="15.5" fill="url(#g7cb34212)"/><path d="M6.5 11.5 Q9 6.5 14 5.2" stroke="#c5e1a5" stroke-width="2.2" fill="none" stroke-linecap="round" opacity="0.8"/></svg></div>
<div style="position:absolute;left:212.0px;top:419.0px;width:12.1px;height:12.1px"><svg width="12.1" height="12.1" viewBox="0 0 32 32" style="display:block"><defs><radialGradient id="g7cb34212" cx="45%" cy="40%" r="60%"><stop offset="0" stop-color="#7cb342"/><stop offset="0.85" stop-color="#7cb342"/><stop offset="1" stop-color="#558b2f"/></radialGradient></defs><circle cx="16" cy="16" r="15.5" fill="url(#g7cb34212)"/><path d="M6.5 11.5 Q9 6.5 14 5.2" stroke="#c5e1a5" stroke-width="2.2" fill="none" stroke-linecap="round" opacity="0.8"/></svg></div>
<div style="position:absolute;left:226.84999999999997px;top:419.0px;width:12.1px;height:12.1px"><svg width="12.1" height="12.1" viewBox="0 0 32 32" style="display:block"><defs><radialGradient id="g7cb34212" cx="45%" cy="40%" r="60%"><stop offset="0" stop-color="#7cb342"/><stop offset="0.85" stop-color="#7cb342"/><stop offset="1" stop-color="#558b2f"/></radialGradient></defs><circle cx="16" cy="16" r="15.5" fill="url(#g7cb34212)"/><path d="M6.5 11.5 Q9 6.5 14 5.2" stroke="#c5e1a5" stroke-width="2.2" fill="none" stroke-linecap="round" opacity="0.8"/></svg></div>
<div style="position:absolute;left:241.7px;top:419.0px;width:12.1px;height:12.1px"><svg width="12.1" height="12.1" viewBox="0 0 32 32" style="display:block"><defs><radialGradient id="g7cb34212" cx="45%" cy="40%" r="60%"><stop offset="0" stop-color="#7cb342"/><stop offset="0.85" stop-color="#7cb342"/><stop offset="1" stop-color="#558b2f"/></radialGradient></defs><circle cx="16" cy="16" r="15.5" fill="url(#g7cb34212)"/><path d="M6.5 11.5 Q9 6.5 14 5.2" stroke="#c5e1a5" stroke-width="2.2" fill="none" stroke-linecap="round" opacity="0.8"/></svg></div>
<div style="position:absolute;left:256.55px;top:419.0px;width:12.1px;height:12.1px"><svg width="12.1" height="12.1" viewBox="0 0 32 32" style="display:block"><defs><radialGradient id="g7cb34212" cx="45%" cy="40%" r="60%"><stop offset="0" stop-color="#7cb342"/><stop offset="0.85" stop-color="#7cb342"/><stop offset="1" stop-color="#558b2f"/></radialGradient></defs><circle cx="16" cy="16" r="15.5" fill="url(#g7cb34212)"/><path d="M6.5 11.5 Q9 6.5 14 5.2" stroke="#c5e1a5" stroke-width="2.2" fill="none" stroke-linecap="round" opacity="0.8"/></svg></div>
<div style="position:absolute;left:271.4px;top:419.0px;width:12.1px;height:12.1px"><svg width="12.1" height="12.1" viewBox="0 0 32 32" style="display:block"><defs><radialGradient id="g7cb34212" cx="45%" cy="40%" r="60%"><stop offset="0" stop-color="#7cb342"/><stop offset="0.85" stop-color="#7cb342"/><stop offset="1" stop-color="#558b2f"/></radialGradient></defs><circle cx="16" cy="16" r="15.5" fill="url(#g7cb34212)"/><path d="M6.5 11.5 Q9 6.5 14 5.2" stroke="#c5e1a5" stroke-width="2.2" fill="none" stroke-linecap="round" opacity="0.8"/></svg></div>
<div style="position:absolute;left:286.25px;top:419.0px;width:12.1px;height:12.1px"><svg width="12.1" height="12.1" viewBox="0 0 32 32" style="display:block"><defs><radialGradient id="g7cb34212" cx="45%" cy="40%" r="60%"><stop offset="0" stop-color="#7cb342"/><stop offset="0.85" stop-color="#7cb342"/><stop offset="1" stop-color="#558b2f"/></radialGradient></defs><circle cx="16" cy="16" r="15.5" fill="url(#g7cb34212)"/><path d="M6.5 11.5 Q9 6.5 14 5.2" stroke="#c5e1a5" stroke-width="2.2" fill="none" stroke-linecap="round" opacity="0.8"/></svg></div>
<div style="position:absolute;left:301.1px;top:419.0px;width:12.1px;height:12.1px"><svg width="12.1" height="12.1" viewBox="0 0 32 32" style="display:block"><defs><radialGradient id="g7cb34212" cx="45%" cy="40%" r="60%"><stop offset="0" stop-color="#7cb342"/><stop offset="0.85" stop-color="#7cb342"/><stop offset="1" stop-color="#558b2f"/></radialGradient></defs><circle cx="16" cy="16" r="15.5" fill="url(#g7cb34212)"/><path d="M6.5 11.5 Q9 6.5 14 5.2" stroke="#c5e1a5" stroke-width="2.2" fill="none" stroke-linecap="round" opacity="0.8"/></svg></div>
<div style="position:absolute;left:315.95px;top:419.0px;width:12.1px;height:12.1px"><svg width="12.1" height="12.1" viewBox="0 0 32 32" style="display:block"><defs><radialGradient id="g7cb34212" cx="45%" cy="40%" r="60%"><stop offset="0" stop-color="#7cb342"/><stop offset="0.85" stop-color="#7cb342"/><stop offset="1" stop-color="#558b2f"/></radialGradient></defs><circle cx="16" cy="16" r="15.5" fill="url(#g7cb34212)"/><path d="M6.5 11.5 Q9 6.5 14 5.2" stroke="#c5e1a5" stroke-width="2.2" fill="none" stroke-linecap="round" opacity="0.8"/></svg></div>
<div style="position:absolute;left:330.8px;top:419.0px;width:12.1px;height:12.1px"><svg width="12.1" height="12.1" viewBox="0 0 32 32" style="display:block"><defs><radialGradient id="g7cb34212" cx="45%" cy="40%" r="60%"><stop offset="0" stop-color="#7cb342"/><stop offset="0.85" stop-color="#7cb342"/><stop offset="1" stop-color="#558b2f"/></radialGradient></defs><circle cx="16" cy="16" r="15.5" fill="url(#g7cb34212)"/><path d="M6.5 11.5 Q9 6.5 14 5.2" stroke="#c5e1a5" stroke-width="2.2" fill="none" stroke-linecap="round" opacity="0.8"/></svg></div>
<div style="position:absolute;left:345.65px;top:419.0px;width:12.1px;height:12.1px"><svg width="12.1" height="12.1" viewBox="0 0 32 32" style="display:block"><defs><radialGradient id="g7cb34212" cx="45%" cy="40%" r="60%"><stop offset="0" stop-color="#7cb342"/><stop offset="0.85" stop-color="#7cb342"/><stop offset="1" stop-color="#558b2f"/></radialGradient></defs><circle cx="16" cy="16" r="15.5" fill="url(#g7cb34212)"/><path d="M6.5 11.5 Q9 6.5 14 5.2" stroke="#c5e1a5" stroke-width="2.2" fill="none" stroke-linecap="round" opacity="0.8"/></svg></div>
<div style="position:absolute;left:360.5px;top:419.0px;width:12.1px;height:12.1px"><svg width="12.1" height="12.1" viewBox="0 0 32 32" style="display:block"><defs><radialGradient id="g7cb34212" cx="45%" cy="40%" r="60%"><stop offset="0" stop-color="#7cb342"/><stop offset="0.85" stop-color="#7cb342"/><stop offset="1" stop-color="#558b2f"/></radialGradient></defs><circle cx="16" cy="16" r="15.5" fill="url(#g7cb34212)"/><path d="M6.5 11.5 Q9 6.5 14 5.2" stroke="#c5e1a5" stroke-width="2.2" fill="none" stroke-linecap="round" opacity="0.8"/></svg></div>
<div style="position:absolute;left:375.35px;top:419.0px;width:12.1px;height:12.1px"><svg width="12.1" height="12.1" viewBox="0 0 32 32" style="display:block"><defs><radialGradient id="g7cb34212" cx="45%" cy="40%" r="60%"><stop offset="0" stop-color="#7cb342"/><stop offset="0.85" stop-color="#7cb342"/><stop offset="1" stop-color="#558b2f"/></radialGradient></defs><circle cx="16" cy="16" r="15.5" fill="url(#g7cb34212)"/><path d="M6.5 11.5 Q9 6.5 14 5.2" stroke="#c5e1a5" stroke-width="2.2" fill="none" stroke-linecap="round" opacity="0.8"/></svg></div>
<div style="position:absolute;left:390.2px;top:419.0px;width:12.1px;height:12.1px"><svg width="12.1" height="12.1" viewBox="0 0 32 32" style="display:block"><defs><radialGradient id="g7cb34212" cx="45%" cy="40%" r="60%"><stop offset="0" stop-color="#7cb342"/><stop offset="0.85" stop-color="#7cb342"/><stop offset="1" stop-color="#558b2f"/></radialGradient></defs><circle cx="16" cy="16" r="15.5" fill="url(#g7cb34212)"/><path d="M6.5 11.5 Q9 6.5 14 5.2" stroke="#c5e1a5" stroke-width="2.2" fill="none" stroke-linecap="round" opacity="0.8"/></svg></div>
<div style="position:absolute;left:405.05px;top:419.0px;width:12.1px;height:12.1px"><svg width="12.1" height="12.1" viewBox="0 0 32 32" style="display:block"><defs><radialGradient id="g7cb34212" cx="45%" cy="40%" r="60%"><stop offset="0" stop-color="#7cb342"/><stop offset="0.85" stop-color="#7cb342"/><stop offset="1" stop-color="#558b2f"/></radialGradient></defs><circle cx="16" cy="16" r="15.5" fill="url(#g7cb34212)"/><path d="M6.5 11.5 Q9 6.5 14 5.2" stroke="#c5e1a5" stroke-width="2.2" fill="none" stroke-linecap="round" opacity="0.8"/></svg></div>
<div style="position:absolute;left:419.9px;top:419.0px;width:12.1px;height:12.1px"><svg width="12.1" height="12.1" viewBox="0 0 32 32" style="display:block"><defs><radialGradient id="g7cb34212" cx="45%" cy="40%" r="60%"><stop offset="0" stop-color="#7cb342"/><stop offset="0.85" stop-color="#7cb342"/><stop offset="1" stop-color="#558b2f"/></radialGradient></defs><circle cx="16" cy="16" r="15.5" fill="url(#g7cb34212)"/><path d="M6.5 11.5 Q9 6.5 14 5.2" stroke="#c5e1a5" stroke-width="2.2" fill="none" stroke-linecap="round" opacity="0.8"/></svg></div>
<div style="position:absolute;left:434.75px;top:419.0px;width:12.1px;height:12.1px"><svg width="12.1" height="12.1" viewBox="0 0 32 32" style="display:block"><defs><radialGradient id="g7cb34212" cx="45%" cy="40%" r="60%"><stop offset="0" stop-color="#7cb342"/><stop offset="0.85" stop-color="#7cb342"/><stop offset="1" stop-color="#558b2f"/></radialGradient></defs><circle cx="16" cy="16" r="15.5" fill="url(#g7cb34212)"/><path d="M6.5 11.5 Q9 6.5 14 5.2" stroke="#c5e1a5" stroke-width="2.2" fill="none" stroke-linecap="round" opacity="0.8"/></svg></div>
<div style="position:absolute;left:449.6px;top:419.0px;width:12.1px;height:12.1px"><svg width="12.1" height="12.1" viewBox="0 0 32 32" style="display:block"><defs><radialGradient id="g7cb34212" cx="45%" cy="40%" r="60%"><stop offset="0" stop-color="#7cb342"/><stop offset="0.85" stop-color="#7cb342"/><stop offset="1" stop-color="#558b2f"/></radialGradient></defs><circle cx="16" cy="16" r="15.5" fill="url(#g7cb34212)"/><path d="M6.5 11.5 Q9 6.5 14 5.2" stroke="#c5e1a5" stroke-width="2.2" fill="none" stroke-linecap="round" opacity="0.8"/></svg></div>
<div style="position:absolute;left:464.45px;top:419.0px;width:12.1px;height:12.1px"><svg width="12.1" height="12.1" viewBox="0 0 32 32" style="display:block"><defs><radialGradient id="g7cb34212" cx="45%" cy="40%" r="60%"><stop offset="0" stop-color="#7cb342"/><stop offset="0.85" stop-color="#7cb342"/><stop offset="1" stop-color="#558b2f"/></radialGradient></defs><circle cx="16" cy="16" r="15.5" fill="url(#g7cb34212)"/><path d="M6.5 11.5 Q9 6.5 14 5.2" stroke="#c5e1a5" stroke-width="2.2" fill="none" stroke-linecap="round" opacity="0.8"/></svg></div>
<div class="t" style="left:31.90px;top:447.72px;font-size:12.5px;color:#888888;">Count: 30</div>
<div class="card" style="left:1128.9px;top:359.5px;width:1088.1px;height:119.3px"></div>
<div style="position:absolute;left:1149.2px;top:379.3px;width:23.5px;height:23.5px"><svg width="23.5" height="23.5" viewBox="0 0 32 32" style="display:block"><defs><radialGradient id="ge0e0e023" cx="45%" cy="40%" r="60%"><stop offset="0" stop-color="#e0e0e0"/><stop offset="0.85" stop-color="#e0e0e0"/><stop offset="1" stop-color="#bdbdbd"/></radialGradient></defs><circle cx="16" cy="16" r="15.5" fill="url(#ge0e0e023)"/><path d="M6.5 11.5 Q9 6.5 14 5.2" stroke="#ffffff" stroke-width="2.2" fill="none" stroke-linecap="round" opacity="0.8"/></svg></div>
<div class="t" style="left:1183.20px;top:383.70px;font-size:16.05px;color:#e8e8e8;font-weight:bold;">SPARSE Memories</div>
<div style="position:absolute;left:1149.4px;top:419.0px;width:12.1px;height:12.1px"><svg width="12.1" height="12.1" viewBox="0 0 32 32" style="display:block"><defs><radialGradient id="ge0e0e012" cx="45%" cy="40%" r="60%"><stop offset="0" stop-color="#e0e0e0"/><stop offset="0.85" stop-color="#e0e0e0"/><stop offset="1" stop-color="#bdbdbd"/></radialGradient></defs><circle cx="16" cy="16" r="15.5" fill="url(#ge0e0e012)"/><path d="M6.5 11.5 Q9 6.5 14 5.2" stroke="#ffffff" stroke-width="2.2" fill="none" stroke-linecap="round" opacity="0.8"/></svg></div>
<div style="position:absolute;left:1164.25px;top:419.0px;width:12.1px;height:12.1px"><svg width="12.1" height="12.1" viewBox="0 0 32 32" style="display:block"><defs><radialGradient id="ge0e0e012" cx="45%" cy="40%" r="60%"><stop offset="0" stop-color="#e0e0e0"/><stop offset="0.85" stop-color="#e0e0e0"/><stop offset="1" stop-color="#bdbdbd"/></radialGradient></defs><circle cx="16" cy="16" r="15.5" fill="url(#ge0e0e012)"/><path d="M6.5 11.5 Q9 6.5 14 5.2" stroke="#ffffff" stroke-width="2.2" fill="none" stroke-linecap="round" opacity="0.8"/></svg></div>
<div style="position:absolute;left:1179.1000000000001px;top:419.0px;width:12.1px;height:12.1px"><svg width="12.1" height="12.1" viewBox="0 0 32 32" style="display:block"><defs><radialGradient id="ge0e0e012" cx="45%" cy="40%" r="60%"><stop offset="0" stop-color="#e0e0e0"/><stop offset="0.85" stop-color="#e0e0e0"/><stop offset="1" stop-color="#bdbdbd"/></radialGradient></defs><circle cx="16" cy="16" r="15.5" fill="url(#ge0e0e012)"/><path d="M6.5 11.5 Q9 6.5 14 5.2" stroke="#ffffff" stroke-width="2.2" fill="none" stroke-linecap="round" opacity="0.8"/></svg></div>
<div style="position:absolute;left:1193.95px;top:419.0px;width:12.1px;height:12.1px"><svg width="12.1" height="12.1" viewBox="0 0 32 32" style="display:block"><defs><radialGradient id="ge0e0e012" cx="45%" cy="40%" r="60%"><stop offset="0" stop-color="#e0e0e0"/><stop offset="0.85" stop-color="#e0e0e0"/><stop offset="1" stop-color="#bdbdbd"/></radialGradient></defs><circle cx="16" cy="16" r="15.5" fill="url(#ge0e0e012)"/><path d="M6.5 11.5 Q9 6.5 14 5.2" stroke="#ffffff" stroke-width="2.2" fill="none" stroke-linecap="round" opacity="0.8"/></svg></div>
<div style="position:absolute;left:1208.8000000000002px;top:419.0px;width:12.1px;height:12.1px"><svg width="12.1" height="12.1" viewBox="0 0 32 32" style="display:block"><defs><radialGradient id="ge0e0e012" cx="45%" cy="40%" r="60%"><stop offset="0" stop-color="#e0e0e0"/><stop offset="0.85" stop-color="#e0e0e0"/><stop offset="1" stop-color="#bdbdbd"/></radialGradient></defs><circle cx="16" cy="16" r="15.5" fill="url(#ge0e0e012)"/><path d="M6.5 11.5 Q9 6.5 14 5.2" stroke="#ffffff" stroke-width="2.2" fill="none" stroke-linecap="round" opacity="0.8"/></svg></div>
<div style="position:absolute;left:1223.65px;top:419.0px;width:12.1px;height:12.1px"><svg width="12.1" height="12.1" viewBox="0 0 32 32" style="display:block"><defs><radialGradient id="ge0e0e012" cx="45%" cy="40%" r="60%"><stop offset="0" stop-color="#e0e0e0"/><stop offset="0.85" stop-color="#e0e0e0"/><stop offset="1" stop-color="#bdbdbd"/></radialGradient></defs><circle cx="16" cy="16" r="15.5" fill="url(#ge0e0e012)"/><path d="M6.5 11.5 Q9 6.5 14 5.2" stroke="#ffffff" stroke-width="2.2" fill="none" stroke-linecap="round" opacity="0.8"/></svg></div>
<div style="position:absolute;left:1238.5px;top:419.0px;width:12.1px;height:12.1px"><svg width="12.1" height="12.1" viewBox="0 0 32 32" style="display:block"><defs><radialGradient id="ge0e0e012" cx="45%" cy="40%" r="60%"><stop offset="0" stop-color="#e0e0e0"/><stop offset="0.85" stop-color="#e0e0e0"/><stop offset="1" stop-color="#bdbdbd"/></radialGradient></defs><circle cx="16" cy="16" r="15.5" fill="url(#ge0e0e012)"/><path d="M6.5 11.5 Q9 6.5 14 5.2" stroke="#ffffff" stroke-width="2.2" fill="none" stroke-linecap="round" opacity="0.8"/></svg></div>
<div style="position:absolute;left:1253.3500000000001px;top:419.0px;width:12.1px;height:12.1px"><svg width="12.1" height="12.1" viewBox="0 0 32 32" style="display:block"><defs><radialGradient id="ge0e0e012" cx="45%" cy="40%" r="60%"><stop offset="0" stop-color="#e0e0e0"/><stop offset="0.85" stop-color="#e0e0e0"/><stop offset="1" stop-color="#bdbdbd"/></radialGradient></defs><circle cx="16" cy="16" r="15.5" fill="url(#ge0e0e012)"/><path d="M6.5 11.5 Q9 6.5 14 5.2" stroke="#ffffff" stroke-width="2.2" fill="none" stroke-linecap="round" opacity="0.8"/></svg></div>
<div style="position:absolute;left:1268.2px;top:419.0px;width:12.1px;height:12.1px"><svg width="12.1" height="12.1" viewBox="0 0 32 32" style="display:block"><defs><radialGradient id="ge0e0e012" cx="45%" cy="40%" r="60%"><stop offset="0" stop-color="#e0e0e0"/><stop offset="0.85" stop-color="#e0e0e0"/><stop offset="1" stop-color="#bdbdbd"/></radialGradient></defs><circle cx="16" cy="16" r="15.5" fill="url(#ge0e0e012)"/><path d="M6.5 11.5 Q9 6.5 14 5.2" stroke="#ffffff" stroke-width="2.2" fill="none" stroke-linecap="round" opacity="0.8"/></svg></div>
<div style="position:absolute;left:1283.0500000000002px;top:419.0px;width:12.1px;height:12.1px"><svg width="12.1" height="12.1" viewBox="0 0 32 32" style="display:block"><defs><radialGradient id="ge0e0e012" cx="45%" cy="40%" r="60%"><stop offset="0" stop-color="#e0e0e0"/><stop offset="0.85" stop-color="#e0e0e0"/><stop offset="1" stop-color="#bdbdbd"/></radialGradient></defs><circle cx="16" cy="16" r="15.5" fill="url(#ge0e0e012)"/><path d="M6.5 11.5 Q9 6.5 14 5.2" stroke="#ffffff" stroke-width="2.2" fill="none" stroke-linecap="round" opacity="0.8"/></svg></div>
<div style="position:absolute;left:1297.9px;top:419.0px;width:12.1px;height:12.1px"><svg width="12.1" height="12.1" viewBox="0 0 32 32" style="display:block"><defs><radialGradient id="ge0e0e012" cx="45%" cy="40%" r="60%"><stop offset="0" stop-color="#e0e0e0"/><stop offset="0.85" stop-color="#e0e0e0"/><stop offset="1" stop-color="#bdbdbd"/></radialGradient></defs><circle cx="16" cy="16" r="15.5" fill="url(#ge0e0e012)"/><path d="M6.5 11.5 Q9 6.5 14 5.2" stroke="#ffffff" stroke-width="2.2" fill="none" stroke-linecap="round" opacity="0.8"/></svg></div>
<div style="position:absolute;left:1312.75px;top:419.0px;width:12.1px;height:12.1px"><svg width="12.1" height="12.1" viewBox="0 0 32 32" style="display:block"><defs><radialGradient id="ge0e0e012" cx="45%" cy="40%" r="60%"><stop offset="0" stop-color="#e0e0e0"/><stop offset="0.85" stop-color="#e0e0e0"/><stop offset="1" stop-color="#bdbdbd"/></radialGradient></defs><circle cx="16" cy="16" r="15.5" fill="url(#ge0e0e012)"/><path d="M6.5 11.5 Q9 6.5 14 5.2" stroke="#ffffff" stroke-width="2.2" fill="none" stroke-linecap="round" opacity="0.8"/></svg></div>
<div style="position:absolute;left:1327.6000000000001px;top:419.0px;width:12.1px;height:12.1px"><svg width="12.1" height="12.1" viewBox="0 0 32 32" style="display:block"><defs><radialGradient id="ge0e0e012" cx="45%" cy="40%" r="60%"><stop offset="0" stop-color="#e0e0e0"/><stop offset="0.85" stop-color="#e0e0e0"/><stop offset="1" stop-color="#bdbdbd"/></radialGradient></defs><circle cx="16" cy="16" r="15.5" fill="url(#ge0e0e012)"/><path d="M6.5 11.5 Q9 6.5 14 5.2" stroke="#ffffff" stroke-width="2.2" fill="none" stroke-linecap="round" opacity="0.8"/></svg></div>
<div style="position:absolute;left:1342.45px;top:419.0px;width:12.1px;height:12.1px"><svg width="12.1" height="12.1" viewBox="0 0 32 32" style="display:block"><defs><radialGradient id="ge0e0e012" cx="45%" cy="40%" r="60%"><stop offset="0" stop-color="#e0e0e0"/><stop offset="0.85" stop-color="#e0e0e0"/><stop offset="1" stop-color="#bdbdbd"/></radialGradient></defs><circle cx="16" cy="16" r="15.5" fill="url(#ge0e0e012)"/><path d="M6.5 11.5 Q9 6.5 14 5.2" stroke="#ffffff" stroke-width="2.2" fill="none" stroke-linecap="round" opacity="0.8"/></svg></div>
<div style="position:absolute;left:1357.3000000000002px;top:419.0px;width:12.1px;height:12.1px"><svg width="12.1" height="12.1" viewBox="0 0 32 32" style="display:block"><defs><radialGradient id="ge0e0e012" cx="45%" cy="40%" r="60%"><stop offset="0" stop-color="#e0e0e0"/><stop offset="0.85" stop-color="#e0e0e0"/><stop offset="1" stop-color="#bdbdbd"/></radialGradient></defs><circle cx="16" cy="16" r="15.5" fill="url(#ge0e0e012)"/><path d="M6.5 11.5 Q9 6.5 14 5.2" stroke="#ffffff" stroke-width="2.2" fill="none" stroke-linecap="round" opacity="0.8"/></svg></div>
<div style="position:absolute;left:1372.15px;top:419.0px;width:12.1px;height:12.1px"><svg width="12.1" height="12.1" viewBox="0 0 32 32" style="display:block"><defs><radialGradient id="ge0e0e012" cx="45%" cy="40%" r="60%"><stop offset="0" stop-color="#e0e0e0"/><stop offset="0.85" stop-color="#e0e0e0"/><stop offset="1" stop-color="#bdbdbd"/></radialGradient></defs><circle cx="16" cy="16" r="15.5" fill="url(#ge0e0e012)"/><path d="M6.5 11.5 Q9 6.5 14 5.2" stroke="#ffffff" stroke-width="2.2" fill="none" stroke-linecap="round" opacity="0.8"/></svg></div>
<div style="position:absolute;left:1387.0px;top:419.0px;width:12.1px;height:12.1px"><svg width="12.1" height="12.1" viewBox="0 0 32 32" style="display:block"><defs><radialGradient id="ge0e0e012" cx="45%" cy="40%" r="60%"><stop offset="0" stop-color="#e0e0e0"/><stop offset="0.85" stop-color="#e0e0e0"/><stop offset="1" stop-color="#bdbdbd"/></radialGradient></defs><circle cx="16" cy="16" r="15.5" fill="url(#ge0e0e012)"/><path d="M6.5 11.5 Q9 6.5 14 5.2" stroke="#ffffff" stroke-width="2.2" fill="none" stroke-linecap="round" opacity="0.8"/></svg></div>
<div style="position:absolute;left:1401.8500000000001px;top:419.0px;width:12.1px;height:12.1px"><svg width="12.1" height="12.1" viewBox="0 0 32 32" style="display:block"><defs><radialGradient id="ge0e0e012" cx="45%" cy="40%" r="60%"><stop offset="0" stop-color="#e0e0e0"/><stop offset="0.85" stop-color="#e0e0e0"/><stop offset="1" stop-color="#bdbdbd"/></radialGradient></defs><circle cx="16" cy="16" r="15.5" fill="url(#ge0e0e012)"/><path d="M6.5 11.5 Q9 6.5 14 5.2" stroke="#ffffff" stroke-width="2.2" fill="none" stroke-linecap="round" opacity="0.8"/></svg></div>
<div style="position:absolute;left:1416.7px;top:419.0px;width:12.1px;height:12.1px"><svg width="12.1" height="12.1" viewBox="0 0 32 32" style="display:block"><defs><radialGradient id="ge0e0e012" cx="45%" cy="40%" r="60%"><stop offset="0" stop-color="#e0e0e0"/><stop offset="0.85" stop-color="#e0e0e0"/><stop offset="1" stop-color="#bdbdbd"/></radialGradient></defs><circle cx="16" cy="16" r="15.5" fill="url(#ge0e0e012)"/><path d="M6.5 11.5 Q9 6.5 14 5.2" stroke="#ffffff" stroke-width="2.2" fill="none" stroke-linecap="round" opacity="0.8"/></svg></div>
<div style="position:absolute;left:1431.5500000000002px;top:419.0px;width:12.1px;height:12.1px"><svg width="12.1" height="12.1" viewBox="0 0 32 32" style="display:block"><defs><radialGradient id="ge0e0e012" cx="45%" cy="40%" r="60%"><stop offset="0" stop-color="#e0e0e0"/><stop offset="0.85" stop-color="#e0e0e0"/><stop offset="1" stop-color="#bdbdbd"/></radialGradient></defs><circle cx="16" cy="16" r="15.5" fill="url(#ge0e0e012)"/><path d="M6.5 11.5 Q9 6.5 14 5.2" stroke="#ffffff" stroke-width="2.2" fill="none" stroke-linecap="round" opacity="0.8"/></svg></div>
<div style="position:absolute;left:1446.4px;top:419.0px;width:12.1px;height:12.1px"><svg width="12.1" height="12.1" viewBox="0 0 32 32" style="display:block"><defs><radialGradient id="ge0e0e012" cx="45%" cy="40%" r="60%"><stop offset="0" stop-color="#e0e0e0"/><stop offset="0.85" stop-color="#e0e0e0"/><stop offset="1" stop-color="#bdbdbd"/></radialGradient></defs><circle cx="16" cy="16" r="15.5" fill="url(#ge0e0e012)"/><path d="M6.5 11.5 Q9 6.5 14 5.2" stroke="#ffffff" stroke-width="2.2" fill="none" stroke-linecap="round" opacity="0.8"/></svg></div>
<div style="position:absolute;left:1461.25px;top:419.0px;width:12.1px;height:12.1px"><svg width="12.1" height="12.1" viewBox="0 0 32 32" style="display:block"><defs><radialGradient id="ge0e0e012" cx="45%" cy="40%" r="60%"><stop offset="0" stop-color="#e0e0e0"/><stop offset="0.85" stop-color="#e0e0e0"/><stop offset="1" stop-color="#bdbdbd"/></radialGradient></defs><circle cx="16" cy="16" r="15.5" fill="url(#ge0e0e012)"/><path d="M6.5 11.5 Q9 6.5 14 5.2" stroke="#ffffff" stroke-width="2.2" fill="none" stroke-linecap="round" opacity="0.8"/></svg></div>
<div style="position:absolute;left:1476.1000000000001px;top:419.0px;width:12.1px;height:12.1px"><svg width="12.1" height="12.1" viewBox="0 0 32 32" style="display:block"><defs><radialGradient id="ge0e0e012" cx="45%" cy="40%" r="60%"><stop offset="0" stop-color="#e0e0e0"/><stop offset="0.85" stop-color="#e0e0e0"/><stop offset="1" stop-color="#bdbdbd"/></radialGradient></defs><circle cx="16" cy="16" r="15.5" fill="url(#ge0e0e012)"/><path d="M6.5 11.5 Q9 6.5 14 5.2" stroke="#ffffff" stroke-width="2.2" fill="none" stroke-linecap="round" opacity="0.8"/></svg></div>
<div style="position:absolute;left:1490.95px;top:419.0px;width:12.1px;height:12.1px"><svg width="12.1" height="12.1" viewBox="0 0 32 32" style="display:block"><defs><radialGradient id="ge0e0e012" cx="45%" cy="40%" r="60%"><stop offset="0" stop-color="#e0e0e0"/><stop offset="0.85" stop-color="#e0e0e0"/><stop offset="1" stop-color="#bdbdbd"/></radialGradient></defs><circle cx="16" cy="16" r="15.5" fill="url(#ge0e0e012)"/><path d="M6.5 11.5 Q9 6.5 14 5.2" stroke="#ffffff" stroke-width="2.2" fill="none" stroke-linecap="round" opacity="0.8"/></svg></div>
<div style="position:absolute;left:1505.8000000000002px;top:419.0px;width:12.1px;height:12.1px"><svg width="12.1" height="12.1" viewBox="0 0 32 32" style="display:block"><defs><radialGradient id="ge0e0e012" cx="45%" cy="40%" r="60%"><stop offset="0" stop-color="#e0e0e0"/><stop offset="0.85" stop-color="#e0e0e0"/><stop offset="1" stop-color="#bdbdbd"/></radialGradient></defs><circle cx="16" cy="16" r="15.5" fill="url(#ge0e0e012)"/><path d="M6.5 11.5 Q9 6.5 14 5.2" stroke="#ffffff" stroke-width="2.2" fill="none" stroke-linecap="round" opacity="0.8"/></svg></div>
<div style="position:absolute;left:1520.65px;top:419.0px;width:12.1px;height:12.1px"><svg width="12.1" height="12.1" viewBox="0 0 32 32" style="display:block"><defs><radialGradient id="ge0e0e012" cx="45%" cy="40%" r="60%"><stop offset="0" stop-color="#e0e0e0"/><stop offset="0.85" stop-color="#e0e0e0"/><stop offset="1" stop-color="#bdbdbd"/></radialGradient></defs><circle cx="16" cy="16" r="15.5" fill="url(#ge0e0e012)"/><path d="M6.5 11.5 Q9 6.5 14 5.2" stroke="#ffffff" stroke-width="2.2" fill="none" stroke-linecap="round" opacity="0.8"/></svg></div>
<div style="position:absolute;left:1535.5px;top:419.0px;width:12.1px;height:12.1px"><svg width="12.1" height="12.1" viewBox="0 0 32 32" style="display:block"><defs><radialGradient id="ge0e0e012" cx="45%" cy="40%" r="60%"><stop offset="0" stop-color="#e0e0e0"/><stop offset="0.85" stop-color="#e0e0e0"/><stop offset="1" stop-color="#bdbdbd"/></radialGradient></defs><circle cx="16" cy="16" r="15.5" fill="url(#ge0e0e012)"/><path d="M6.5 11.5 Q9 6.5 14 5.2" stroke="#ffffff" stroke-width="2.2" fill="none" stroke-linecap="round" opacity="0.8"/></svg></div>
<div class="t" style="left:1147.50px;top:447.72px;font-size:12.5px;color:#888888;">Count: 27</div>
<div class="t" style="left:13.40px;top:191.81px;font-size:14.22px;color:#dddddd;">Search Query:</div>
<div class="inp" style="left:133.4px;top:184px;width:297px;height:29.6px"></div>
<div class="t" style="left:148.20px;top:193.73px;font-size:12.1px;color:#e0e0e0;">hello</div>
<div class="inp" style="left:439.3px;top:184px;width:94.3px;height:29.6px"></div>
<svg class="a" style="left:452px;top:189px" width="18" height="18" viewBox="452 189 18 18">
<path d="M462.6,199.6 L466.6,203.6" stroke="#666" stroke-width="1.8" stroke-linecap="round"/>
<circle cx="459.3" cy="196.1" r="4.4" fill="#6ba4c2" stroke="#c9c9c9" stroke-width="0.9"/>
<path d="M456.6,195.2 Q457.2,193.3 459.2,192.8" stroke="#dff2fb" stroke-width="1.2" fill="none" stroke-linecap="round"/>
</svg>
<div class="t" style="left:476.00px;top:193.81px;font-size:12px;color:#e0e0e0;">Search</div>
<div class="t" style="left:547.20px;top:191.58px;font-size:14.25px;color:#dddddd;">Companion:</div>
<div class="inp" style="left:641.4px;top:184px;width:155.2px;height:29.8px"></div>
<div class="t" style="left:649px;top:193.4px;font-size:11.8px;font-family:'Liberation Sans', sans-serif;color:#e0e0e0">All Companions</div>
<svg class="a" style="left:783.5px;top:196.5px" width="8" height="5" viewBox="0 0 8 5"><path d="M1 0.8 L4 3.8 L7 0.8" stroke="#ddd" stroke-width="1.2" fill="none"/></svg>
<div class="t" style="left:809.30px;top:191.43px;font-size:14.45px;color:#dddddd;">Results:</div>
<div class="a" style="left:886.3px;top:187px;width:77.7px;height:24.2px;background:#333;border:1px solid #474747"></div>
<div class="t" style="left:892px;top:193.6px;font-size:11.2px;font-family:'Liberation Sans', sans-serif;color:#e0e0e0">100 (Max)</div>
<svg class="a" style="left:951.2px;top:196.5px" width="8" height="5" viewBox="0 0 8 5"><path d="M1 0.8 L4 3.8 L7 0.8" stroke="#ddd" stroke-width="1.2" fill="none"/></svg>
<div class="t" style="left:977.20px;top:191.58px;font-size:14.25px;color:#dddddd;">Date Range:</div>
<div class="inp" style="left:1080px;top:187.2px;width:115px;height:23.5px"></div>
<div class="t" style="left:1087.10px;top:193.51px;font-size:12px;color:#e0e0e0;">09</div>
<div class="t" style="left:1104.10px;top:193.51px;font-size:12px;color:#e0e0e0;">/</div>
<div class="t" style="left:1113.95px;top:193.51px;font-size:12px;color:#e0e0e0;">01</div>
<div class="t" style="left:1130.95px;top:193.51px;font-size:12px;color:#e0e0e0;">/</div>
<div class="t" style="left:1140.80px;top:193.51px;font-size:12px;color:#e0e0e0;">2025</div>
<svg class="a" style="left:1175px;top:192px" width="12" height="12" viewBox="0 0 12 12">
<rect x="0.8" y="2" width="10.4" height="9.2" rx="1" fill="none" stroke="#bbb" stroke-width="1.3"/><rect x="0.8" y="2" width="10.4" height="2.6" fill="#bbb"/>
<path d="M3.2 0.5 V3 M8.8 0.5 V3" stroke="#bbb" stroke-width="1.3"/></svg>
<div class="t" style="left:1204.20px;top:192.20px;font-size:14.1px;color:#888888;">to</div>
<div class="inp" style="left:1230.1px;top:187.2px;width:115.2px;height:23.5px"></div>
<div class="t" style="left:1237.20px;top:193.51px;font-size:12px;color:#e0e0e0;">11</div>
<div class="t" style="left:1254.20px;top:193.51px;font-size:12px;color:#e0e0e0;">/</div>
<div class="t" style="left:1264.05px;top:193.51px;font-size:12px;color:#e0e0e0;">10</div>
<div class="t" style="left:1281.05px;top:193.51px;font-size:12px;color:#e0e0e0;">/</div>
<div class="t" style="left:1290.90px;top:193.51px;font-size:12px;color:#e0e0e0;">2025</div>
<svg class="a" style="left:1325.1px;top:192px" width="12" height="12" viewBox="0 0 12 12">
<rect x="0.8" y="2" width="10.4" height="9.2" rx="1" fill="none" stroke="#bbb" stroke-width="1.3"/><rect x="0.8" y="2" width="10.4" height="2.6" fill="#bbb"/>
<path d="M3.2 0.5 V3 M8.8 0.5 V3" stroke="#bbb" stroke-width="1.3"/></svg>
<div class="inp" style="left:1354.2px;top:186.1px;width:33.7px;height:25.2px"></div>
<svg class="a" style="left:1363px;top:190px" width="16" height="16" viewBox="1363 190 16 16"><path d="M1366.4,193.6 L1375.8,203 M1375.8,193.6 L1366.4,203" stroke="#64656a" stroke-width="3.6" stroke-linecap="round"/></svg>
<div class="inp" style="left:1402px;top:184px;width:129.8px;height:29.5px"></div>
<svg class="a" style="left:1417px;top:190px" width="15" height="16" viewBox="1417 190 15 16">
<rect x="1418.1" y="191.7" width="11.9" height="12.3" fill="#f7f7f7"/><rect x="1418.1" y="191.7" width="11.9" height="4.8" fill="#e8372c"/>
<path d="M1420.5,193.8 h7" stroke="#f4a09a" stroke-width="0.7"/>
<path d="M1421.2,199.2 l1.5,-0.9 v4.9" stroke="#1a1a1a" stroke-width="1.5" fill="none"/>
<path d="M1424.4,198.6 h3.3 l-2,4.7" stroke="#1a1a1a" stroke-width="1.5" fill="none"/>
</svg>
<div class="t" style="left:1439.00px;top:193.92px;font-size:11.85px;color:#e0e0e0;">Load Recent</div>
<div class="inp" style="left:1540.8px;top:184px;width:93.8px;height:29.5px"></div>
<svg class="a" style="left:1555px;top:190px" width="16" height="16" viewBox="1555 190 16 16">
<rect x="1556.2" y="191.8" width="13.3" height="13" fill="#fafafa"/>
<path d="M1557,195 h12 M1557,198 h12 M1557,201 h12" stroke="#e8eef2" stroke-width="0.5"/>
<rect x="1558.1" y="197" width="2.1" height="7.6" fill="#8bc34a"/><rect x="1562" y="198.9" width="2.1" height="5.7" fill="#f44336"/><rect x="1565.8" y="193.9" width="2.1" height="10.7" fill="#1e88e5"/>
</svg>
<div class="t" style="left:1577.00px;top:193.81px;font-size:12px;color:#e0e0e0;">Export</div>
<div class="card" style="left:13.3px;top:514.4px;width:1088.45px;height:389.8px"></div>
<svg class="a" style="left:30px;top:547px" width="24" height="24" viewBox="30 547 24 24">
<rect x="33.3" y="550.1" width="15.3" height="18.1" fill="#fdfdfd" stroke="#9cc8e6" stroke-width="0.7"/>
<path d="M35.3,553.6 h6.5 M35.3,556.4 h9 M35.3,558.4 h8.5 M35.3,560.5 h7 M35.3,562.5 h5 M35.3,565.5 h4" stroke="#b0b0b0" stroke-width="0.8"/>
<path d="M48.9,554.4 L42.9,562.5" stroke="#f8b620" stroke-width="4.2"/>
<path d="M47.6,554.0 L41.7,562.1" stroke="#fcd45a" stroke-width="1.2"/>
<path d="M50.2,552.6 L48.7,554.6" stroke="#9fd6ea" stroke-width="4.2"/>
<path d="M51.2,551.4 L50.2,552.8" stroke="#ef5b5b" stroke-width="4.4" stroke-linecap="round"/>
<path d="M40.9,561.4 L44.4,564 L40.3,566.2 Z" fill="#f5dcb3"/><circle cx="40.8" cy="565.6" r="1" fill="#333"/>
</svg>
<div class="t" style="left:62.40px;top:553.48px;font-size:16.6px;color:#e8e8e8;font-weight:bold;">Memory Content</div>
<div class="a" style="left:32.2px;top:587px;width:1051.5px;height:126.5px;background:#2a2a2a;border-radius:5px"></div>
<div class="t" style="left:40.50px;top:601.19px;font-size:10.85px;color:#e8e8e8;font-weight:bold;">Memory ID:</div>
<div class="t" style="right:1156.8px;top:602.68px;font-size:8.9px;color:#999999">3069d6c9-ec14-4f0a-a627-3b816e0a7c6d</div>
<div class="a" style="left:40.8px;top:616.5px;width:1034px;height:1px;background:#333333"></div>
<div class="t" style="left:40.50px;top:623.19px;font-size:10.85px;color:#e8e8e8;font-weight:bold;">Tier:</div>
<div class="t" style="right:1156.8px;top:623.34px;font-size:10.65px;color:#e0e0e0">CORE</div>
<div class="a" style="left:40.8px;top:638.5px;width:1034px;height:1px;background:#333333"></div>
<div class="t" style="left:40.50px;top:645.19px;font-size:10.85px;color:#e8e8e8;font-weight:bold;">Significance:</div>
<div class="t" style="right:1156.8px;top:645.34px;font-size:10.65px;color:#e0e0e0">0.900</div>
<div class="a" style="left:40.8px;top:660.5px;width:1034px;height:1px;background:#333333"></div>
<div class="t" style="left:40.50px;top:667.19px;font-size:10.85px;color:#e8e8e8;font-weight:bold;">Created:</div>
<div class="t" style="right:1156.8px;top:667.34px;font-size:10.65px;color:#e0e0e0">9/28/2025, 1:27:41 PM</div>
<div class="a" style="left:40.8px;top:682.5px;width:1034px;height:1px;background:#333333"></div>
<div class="t" style="left:40.50px;top:689.19px;font-size:10.85px;color:#e8e8e8;font-weight:bold;">Similarity:</div>
<div class="t" style="right:1156.8px;top:689.34px;font-size:10.65px;color:#e0e0e0">0.0000</div>
<div class="t" style="left:31.90px;top:726.69px;font-size:10.85px;color:#e8e8e8;font-weight:bold;">Key Phrases:</div>
<div class="a" style="left:32.2px;top:748px;width:54.7px;height:16.7px;background:#333333;border-radius:3px"></div>
<div class="t" style="left:32.2px;width:54.7px;text-align:center;top:752.64px;font-size:10px;color:#aaaaaa">Respond</div>
<div class="a" style="left:92.1px;top:748px;width:66.6px;height:16.7px;background:#333333;border-radius:3px"></div>
<div class="t" style="left:92.1px;width:66.6px;text-align:center;top:752.64px;font-size:10px;color:#aaaaaa">naturally</div>
<div class="a" style="left:163.3px;top:748px;width:78.6px;height:16.7px;background:#333333;border-radius:3px"></div>
<div class="t" style="left:163.3px;width:78.6px;text-align:center;top:752.64px;font-size:10px;color:#aaaaaa">considering</div>
<div class="a" style="left:247.2px;top:748px;width:60.80000000000001px;height:16.7px;background:#333333;border-radius:3px"></div>
<div class="t" style="left:247.2px;width:60.80000000000001px;text-align:center;top:752.64px;font-size:10px;color:#aaaaaa">sprinkle</div>
<div class="a" style="left:313.2px;top:748px;width:48.5px;height:16.7px;background:#333333;border-radius:3px"></div>
<div class="t" style="left:313.2px;width:48.5px;text-align:center;top:752.64px;font-size:10px;color:#aaaaaa">little</div>
<div class="a" style="left:32.3px;top:778.8px;width:1051.4px;height:106.2px;background:#1a1a1a;border:1px solid #353535;border-radius:5px"></div>
<div class="t" style="left:45.50px;top:796.62px;font-size:12.5px;color:#dddddd;">User: USER MESSAGE: bob can you make it rain?</div>
<div class="t" style="left:45.50px;top:816.42px;font-size:12.5px;color:#dddddd;">MEMORY: 2025-09-28T19:58:58.526005</div>
<div class="t" style="left:45.50px;top:836.22px;font-size:12.5px;color:#dddddd;">Respond naturally as Bob, considering the context.</div>
<div class="t" style="left:45.50px;top:856.02px;font-size:12.5px;color:#dddddd;">eos: Hey there! I’d love to sprinkle a little magic dust and make th</div>
<div class="card" style="left:1128.9px;top:514.4px;width:1088.1px;height:389.8px"></div>
<svg class="a" style="left:1146px;top:548px" width="23" height="22" viewBox="1146 548 23 22">
<rect x="1148.1" y="549.9" width="18.7" height="1.1" fill="#8a8a8a"/>
<rect x="1148.1" y="551.5" width="18.7" height="2.2" fill="#050505"/>
<rect x="1148.1" y="553.5" width="18.7" height="14.5" fill="#ffffff"/>
<rect x="1148.1" y="566.2" width="18.7" height="1.8" fill="#a9cfe2"/>
<path d="M1152.9,561 V567.6 M1157.7,561 V567.6 M1162.1,561 V567.6" stroke="#b8d8e8" stroke-width="0.7"/>
<rect x="1152" y="553" width="2.3" height="8.4" fill="#050505"/><rect x="1156.3" y="553" width="2.3" height="8.4" fill="#050505"/><rect x="1160.9" y="553" width="2.3" height="8.4" fill="#050505"/>
</svg>
<div class="t" style="left:1177.40px;top:553.48px;font-size:16.73px;color:#e8e8e8;font-weight:bold;">Embedding Signature (768D)</div>
<div class="t" style="left:1147.90px;top:588.00px;font-size:10.7px;color:#888888;">Visual representation of memory's semantic fingerprint</div>
<div class="a" style="left:1147px;top:617px;width:1052px;height:179.5px;background:#111111;border:1px solid #383838"></div>
<svg class="a" style="left:1148px;top:618px" width="1050" height="177.5" viewBox="0 0 1050 177.5"><defs><linearGradient id="bg" x1="0" y1="0" x2="0" y2="1"><stop offset="0" stop-color="#6ab4ff"/><stop offset="1" stop-color="#1f6fd0"/></linearGradient><linearGradient id="pg" x1="0" y1="1" x2="0" y2="0"><stop offset="0" stop-color="#f06a98"/><stop offset="1" stop-color="#b0184e"/></linearGradient></defs><rect x="14.75" y="0" width="1.3" height="62.0" fill="url(#bg)" opacity="0.95"/><rect x="34.35" y="0" width="1.3" height="45.8" fill="url(#bg)" opacity="0.57"/><rect x="42.20" y="0" width="1.8" height="77.9" fill="url(#bg)" opacity="0.95"/><rect x="47.65" y="0" width="1.3" height="28.9" fill="url(#bg)" opacity="0.95"/><rect x="71.75" y="0" width="1.3" height="74.6" fill="url(#bg)" opacity="0.95"/><rect x="133.75" y="0" width="1.3" height="9.9" fill="url(#bg)" opacity="0.95"/><rect x="144.95" y="0" width="1.3" height="65.8" fill="url(#bg)" opacity="0.95"/><rect x="157.25" y="0" width="1.3" height="24.7" fill="url(#bg)" opacity="0.57"/><rect x="212.55" y="0" width="1.3" height="75.7" fill="url(#bg)" opacity="0.57"/><rect x="216.85" y="0" width="1.3" height="59.8" fill="url(#bg)" opacity="0.95"/><rect x="225.75" y="0" width="1.3" height="35.7" fill="url(#bg)" opacity="0.95"/><rect x="231.75" y="0" width="1.3" height="37.6" fill="url(#bg)" opacity="0.95"/><rect x="242.85" y="0" width="1.3" height="4.4" fill="url(#bg)" opacity="0.95"/><rect x="259.50" y="0" width="1.8" height="86.1" fill="url(#bg)" opacity="0.95"/><rect x="299.85" y="0" width="1.3" height="7.2" fill="url(#bg)" opacity="0.95"/><rect x="303.15" y="0" width="1.3" height="46.6" fill="url(#bg)" opacity="0.57"/><rect x="320.85" y="0" width="1.3" height="81.7" fill="url(#bg)" opacity="0.95"/><rect x="323.75" y="0" width="1.3" height="3.6" fill="url(#bg)" opacity="0.95"/><rect x="335.00" y="0" width="1.8" height="5.5" fill="url(#bg)" opacity="0.57"/><rect x="342.45" y="0" width="1.3" height="83.7" fill="url(#bg)" opacity="0.57"/><rect x="408.10" y="0" width="1.8" height="37.6" fill="url(#bg)" opacity="0.57"/><rect x="411.85" y="0" width="1.3" height="31.8" fill="url(#bg)" opacity="0.95"/><rect x="414.10" y="0" width="1.8" height="77.9" fill="url(#bg)" opacity="0.95"/><rect x="457.20" y="0" width="1.8" height="2.8" fill="url(#bg)" opacity="0.95"/><rect x="457.95" y="0" width="1.3" height="42.2" fill="url(#bg)" opacity="0.95"/><rect x="464.10" y="0" width="1.8" height="78.6" fill="url(#bg)" opacity="0.95"/><rect x="483.95" y="0" width="1.3" height="80.8" fill="url(#bg)" opacity="0.95"/><rect x="498.00" y="0" width="1.8" height="56.7" fill="url(#bg)" opacity="0.95"/><rect x="517.75" y="0" width="1.3" height="8.5" fill="url(#bg)" opacity="0.95"/><rect x="540.85" y="0" width="1.3" height="61.8" fill="url(#bg)" opacity="0.95"/><rect x="575.75" y="0" width="1.3" height="14.6" fill="url(#bg)" opacity="0.57"/><rect x="615.65" y="0" width="1.3" height="43.9" fill="url(#bg)" opacity="0.95"/><rect x="661.95" y="0" width="1.3" height="23.1" fill="url(#bg)" opacity="0.95"/><rect x="672.65" y="0" width="1.3" height="33.7" fill="url(#bg)" opacity="0.95"/><rect x="35.00" y="146.9" width="1.8" height="30.6" fill="url(#pg)" opacity="0.95"/><rect x="50.45" y="114.1" width="1.3" height="63.4" fill="url(#pg)" opacity="0.57"/><rect x="67.00" y="120.9" width="1.8" height="56.6" fill="url(#pg)" opacity="0.95"/><rect x="74.20" y="160.1" width="1.8" height="17.4" fill="url(#pg)" opacity="0.95"/><rect x="123.35" y="124.0" width="1.3" height="53.5" fill="url(#pg)" opacity="0.57"/><rect x="130.75" y="135.2" width="1.3" height="42.3" fill="url(#pg)" opacity="0.95"/><rect x="155.55" y="174.1" width="1.3" height="3.4" fill="url(#pg)" opacity="0.95"/><rect x="174.85" y="133.8" width="1.3" height="43.7" fill="url(#pg)" opacity="0.95"/><rect x="211.30" y="136.8" width="1.8" height="40.7" fill="url(#pg)" opacity="0.95"/><rect x="214.15" y="122.0" width="1.3" height="55.5" fill="url(#pg)" opacity="0.57"/><rect x="248.60" y="171.0" width="1.8" height="6.5" fill="url(#pg)" opacity="0.95"/><rect x="272.85" y="159.1" width="1.3" height="18.4" fill="url(#pg)" opacity="0.57"/><rect x="275.50" y="142.1" width="1.8" height="35.4" fill="url(#pg)" opacity="0.95"/><rect x="379.75" y="100.4" width="1.3" height="77.1" fill="url(#pg)" opacity="0.95"/><rect x="439.35" y="177.0" width="1.3" height="0.5" fill="url(#pg)" opacity="0.95"/><rect x="449.05" y="171.0" width="1.3" height="6.5" fill="url(#pg)" opacity="0.57"/><rect x="451.60" y="168.0" width="1.8" height="9.5" fill="url(#pg)" opacity="0.95"/><rect x="489.95" y="135.2" width="1.3" height="42.3" fill="url(#pg)" opacity="0.57"/><rect x="522.90" y="89.9" width="1.8" height="87.6" fill="url(#pg)" opacity="0.95"/><rect x="528.10" y="120.9" width="1.8" height="56.6" fill="url(#pg)" opacity="0.95"/><rect x="588.75" y="169.2" width="1.3" height="8.3" fill="url(#pg)" opacity="0.95"/><rect x="590.75" y="93.3" width="1.3" height="84.2" fill="url(#pg)" opacity="0.95"/><rect x="594.00" y="167.0" width="1.8" height="10.5" fill="url(#pg)" opacity="0.95"/><rect x="630.75" y="93.0" width="1.3" height="84.5" fill="url(#pg)" opacity="0.57"/><rect x="635.10" y="155.1" width="1.8" height="22.4" fill="url(#pg)" opacity="0.95"/><rect x="637.15" y="160.4" width="1.3" height="17.1" fill="url(#pg)" opacity="0.95"/><rect x="657.85" y="158.8" width="1.3" height="18.7" fill="url(#pg)" opacity="0.57"/></svg>
<div style="position:absolute;left:1147.8px;top:814.6px;width:12px;height:12px"><svg width="12" height="12" viewBox="0 0 32 32" style="display:block"><defs><radialGradient id="g1a7fdc12" cx="45%" cy="40%" r="60%"><stop offset="0" stop-color="#1a7fdc"/><stop offset="0.85" stop-color="#1a7fdc"/><stop offset="1" stop-color="#1565c0"/></radialGradient></defs><circle cx="16" cy="16" r="15.5" fill="url(#g1a7fdc12)"/><path d="M6.5 11.5 Q9 6.5 14 5.2" stroke="#90caf9" stroke-width="2.2" fill="none" stroke-linecap="round" opacity="0.8"/></svg></div>
<div class="t" style="left:1166.20px;top:816.15px;font-size:10.77px;color:#777777;">High values (&gt;0.7)</div>
<div class="t" style="left:1625.00px;top:814.97px;font-size:10.74px;color:#666666;">Dimension: -/767</div>
<div style="position:absolute;left:2071px;top:814.6px;width:12px;height:12px"><svg width="12" height="12" viewBox="0 0 32 32" style="display:block"><defs><radialGradient id="gf4433612" cx="45%" cy="40%" r="60%"><stop offset="0" stop-color="#f44336"/><stop offset="0.85" stop-color="#f44336"/><stop offset="1" stop-color="#d32f2f"/></radialGradient></defs><circle cx="16" cy="16" r="15.5" fill="url(#gf4433612)"/><path d="M6.5 11.5 Q9 6.5 14 5.2" stroke="#ff8a80" stroke-width="2.2" fill="none" stroke-linecap="round" opacity="0.8"/></svg></div>
<div class="t" style="left:2089.70px;top:816.13px;font-size:10.8px;color:#777777;">Low values (&lt;0.3)</div>
</div></body></html>
